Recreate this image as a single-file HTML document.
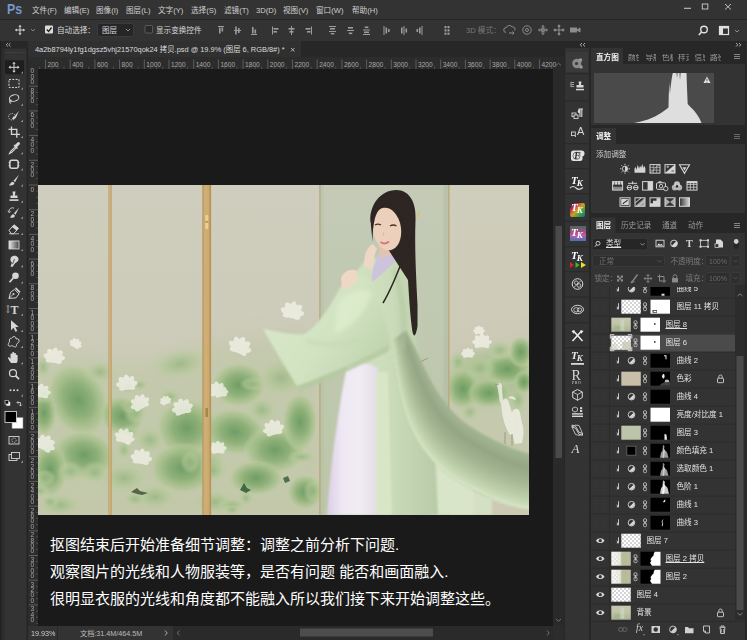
<!DOCTYPE html>
<html><head><meta charset="utf-8">
<style>
html,body{margin:0;padding:0;background:#323232;}
body{width:747px;height:640px;position:relative;overflow:hidden;font-family:"Liberation Sans","Noto Sans CJK SC",sans-serif;color:#d0d0d0;font-size:7.6px;}
.a{position:absolute;}
.t{position:absolute;white-space:nowrap;line-height:1;}
svg{position:absolute;overflow:visible;}
#menubar{left:0;top:0;width:747px;height:19px;background:#333;}
#optbar{left:0;top:19px;width:747px;height:22px;background:#333;border-top:1px solid #262626;box-sizing:border-box;}
#tools{left:0;top:41px;width:28px;height:599px;background:#333;}
#tabbar{left:28px;top:41px;width:536px;height:16px;background:#272727;}
#tab{left:0;top:0;width:273px;height:16px;background:#303030;}
#hruler{left:28px;top:57px;width:536px;height:12px;background:#2c2c2c;}
#vruler{left:28px;top:69px;width:10px;height:557px;background:#2c2c2c;}
#canvas{left:38px;top:69px;width:515px;height:557px;background:#1a1a1a;}
#vscroll{left:553px;top:57px;width:11px;height:569px;background:#2a2a2a;}
#status{left:28px;top:626px;width:536px;height:14px;background:#333;}
#rhead{left:564px;top:41px;width:183px;height:7px;background:#272727;}
#strip{left:565px;top:48px;width:24px;height:592px;background:#333;}
#gap{left:589px;top:48px;width:2px;height:592px;background:#272727;}
#panels{left:591px;top:48px;width:156px;height:592px;background:#333;}
#photo{left:38px;top:185px;width:491px;height:330px;background:#c9c8b4;overflow:hidden;}
.rl{font-size:6.6px;color:#a8a8a8;}
.cap{font-size:15px;color:#fff;left:50px;}
</style></head><body>
<div id="menubar" class="a"></div>
<div id="optbar" class="a"></div>
<div id="tools" class="a"></div>
<div id="tabbar" class="a"><div id="tab" class="a"></div></div>
<div id="hruler" class="a"></div>
<div id="vruler" class="a"></div>
<div id="canvas" class="a"></div>
<div id="vscroll" class="a"></div>
<div id="status" class="a"></div>
<div id="rhead" class="a"></div>
<div id="strip" class="a"></div>
<div id="gap" class="a"></div>
<div id="panels" class="a"></div>
<div id="photo" class="a"><svg style="left:0;top:0" width="491" height="330" viewBox="38 185 491 330">
<defs>
<filter id="b05" x="-20%" y="-20%" width="140%" height="140%"><feGaussianBlur stdDeviation="0.600"/></filter>
<filter id="b1" x="-20%" y="-20%" width="140%" height="140%"><feGaussianBlur stdDeviation="1"/></filter>
<filter id="b2" x="-20%" y="-20%" width="140%" height="140%"><feGaussianBlur stdDeviation="2.200"/></filter>
<filter id="b4" x="-30%" y="-30%" width="160%" height="160%"><feGaussianBlur stdDeviation="4.500"/></filter>
<filter id="b8" x="-30%" y="-30%" width="160%" height="160%"><feGaussianBlur stdDeviation="9"/></filter>
<linearGradient id="bgL" x1="0" y1="0" x2="0" y2="1"><stop offset="0" stop-color="#cfcebe"/><stop offset="0.450" stop-color="#cdccba"/><stop offset="1" stop-color="#c9c9b2"/></linearGradient>
<linearGradient id="bgC" x1="0" y1="0" x2="0" y2="1"><stop offset="0" stop-color="#c4cab6"/><stop offset="1" stop-color="#bcc7aa"/></linearGradient>
<linearGradient id="bgR" x1="0" y1="0" x2="0" y2="1"><stop offset="0" stop-color="#cfcdbb"/><stop offset="1" stop-color="#cbc9b4"/></linearGradient>
<linearGradient id="wood" x1="0" y1="0" x2="1" y2="0"><stop offset="0" stop-color="#b8955c"/><stop offset="0.300" stop-color="#d1b079"/><stop offset="0.700" stop-color="#ccaa70"/><stop offset="1" stop-color="#b08c52"/></linearGradient>
<linearGradient id="band" gradientUnits="userSpaceOnUse" x1="440" y1="380" x2="400" y2="470"><stop offset="0" stop-color="#9aac8a"/><stop offset="0.350" stop-color="#a2b591"/><stop offset="0.700" stop-color="#b7caa4"/><stop offset="1" stop-color="#c9dbb6"/></linearGradient>
<linearGradient id="skirt" x1="0" y1="0" x2="1" y2="0"><stop offset="0" stop-color="#dccfe6"/><stop offset="0.300" stop-color="#efe8f4"/><stop offset="0.650" stop-color="#f1ecf3"/><stop offset="1" stop-color="#e3dde6"/></linearGradient>
<linearGradient id="dress" x1="0" y1="0" x2="1" y2="0"><stop offset="0" stop-color="#d4e4c4"/><stop offset="0.500" stop-color="#cddebc"/><stop offset="1" stop-color="#b8cba8"/></linearGradient>
<linearGradient id="sleeve" x1="0" y1="0" x2="1" y2="0.600"><stop offset="0" stop-color="#d9e9ca"/><stop offset="0.600" stop-color="#d2e3c2"/><stop offset="1" stop-color="#c1d5b0"/></linearGradient>
<radialGradient id="leaf"><stop offset="0" stop-color="#66985f" stop-opacity="0.900"/><stop offset="0.450" stop-color="#86ac70" stop-opacity="0.850"/><stop offset="0.800" stop-color="#abc38f" stop-opacity="0.700"/><stop offset="1" stop-color="#c2cda6" stop-opacity="0"/></radialGradient>
<radialGradient id="leafL"><stop offset="0" stop-color="#93b47c" stop-opacity="0.750"/><stop offset="0.600" stop-color="#b3c898" stop-opacity="0.550"/><stop offset="1" stop-color="#c2cda6" stop-opacity="0"/></radialGradient>

</defs>
<rect x="38" y="185" width="283" height="330" fill="url(#bgL)"/>
<rect x="320" y="185" width="129" height="330" fill="url(#bgC)"/>
<rect x="449" y="185" width="80" height="330" fill="url(#bgR)"/>
<g filter="url(#b8)">
<path d="M30 375 L70 350 L130 365 L180 350 L240 340 L300 330 L325 340 L325 520 L30 520z" fill="#bdc9a4" opacity="0.550"/>
<path d="M449 360 L480 345 L535 335 L535 520 L449 520z" fill="#bdc9a6" opacity="0.500"/>
</g>
<ellipse cx="78" cy="400" rx="30" ry="39" transform="rotate(-25 78 400)" fill="url(#leaf)"/>
<ellipse cx="84" cy="455" rx="32" ry="25" transform="rotate(10 84 455)" fill="url(#leaf)"/>
<ellipse cx="50" cy="470" rx="18" ry="28" transform="rotate(0 50 470)" fill="url(#leaf)"/>
<ellipse cx="44" cy="413" rx="13" ry="23" transform="rotate(0 44 413)" fill="url(#leaf)"/>
<ellipse cx="122" cy="416" rx="23" ry="20" transform="rotate(20 122 416)" fill="url(#leaf)"/>
<ellipse cx="180" cy="364" rx="30" ry="16" transform="rotate(-10 180 364)" fill="url(#leafL)"/>
<ellipse cx="187" cy="428" rx="32" ry="30" transform="rotate(0 187 428)" fill="url(#leaf)"/>
<ellipse cx="183" cy="468" rx="34" ry="26" transform="rotate(0 183 468)" fill="url(#leaf)"/>
<ellipse cx="124" cy="478" rx="25" ry="16" transform="rotate(0 124 478)" fill="url(#leafL)"/>
<ellipse cx="239" cy="385" rx="28" ry="23" transform="rotate(0 239 385)" fill="url(#leaf)"/>
<ellipse cx="235" cy="432" rx="32" ry="24" transform="rotate(10 235 432)" fill="url(#leaf)"/>
<ellipse cx="281" cy="378" rx="25" ry="20" transform="rotate(0 281 378)" fill="url(#leafL)"/>
<ellipse cx="275" cy="450" rx="32" ry="24" transform="rotate(0 275 450)" fill="url(#leaf)"/>
<ellipse cx="256" cy="478" rx="28" ry="18" transform="rotate(0 256 478)" fill="url(#leaf)"/>
<ellipse cx="155" cy="497" rx="23" ry="14" transform="rotate(0 155 497)" fill="url(#leafL)"/>
<ellipse cx="300" cy="422" rx="18" ry="30" transform="rotate(0 300 422)" fill="url(#leaf)"/>
<ellipse cx="305" cy="492" rx="18" ry="18" transform="rotate(0 305 492)" fill="url(#leaf)"/>
<ellipse cx="215" cy="502" rx="21" ry="13" transform="rotate(0 215 502)" fill="url(#leafL)"/>
<ellipse cx="60" cy="505" rx="23" ry="12" transform="rotate(0 60 505)" fill="url(#leafL)"/>
<ellipse cx="100" cy="372" rx="16" ry="12" transform="rotate(0 100 372)" fill="url(#leafL)"/>
<ellipse cx="150" cy="440" rx="16" ry="14" transform="rotate(0 150 440)" fill="url(#leafL)"/>
<ellipse cx="213" cy="465" rx="14" ry="16" transform="rotate(0 213 465)" fill="url(#leafL)"/>
<ellipse cx="262" cy="410" rx="16" ry="14" transform="rotate(0 262 410)" fill="url(#leafL)"/>
<ellipse cx="213" cy="471" rx="14" ry="12" fill="url(#leafL)"/>
<ellipse cx="246" cy="498" rx="8" ry="9" fill="url(#leafL)"/>
<ellipse cx="302" cy="457" rx="15" ry="7" fill="url(#leafL)"/>
<ellipse cx="170" cy="397" rx="12" ry="9" fill="url(#leafL)"/>
<ellipse cx="44" cy="393" rx="10" ry="11" fill="url(#leafL)"/>
<ellipse cx="253" cy="384" rx="14" ry="7" fill="url(#leafL)"/>
<ellipse cx="40" cy="491" rx="10" ry="7" fill="url(#leafL)"/>
<ellipse cx="313" cy="491" rx="10" ry="12" fill="url(#leafL)"/>
<ellipse cx="190" cy="462" rx="10" ry="12" fill="url(#leafL)"/>
<ellipse cx="232" cy="505" rx="15" ry="8" fill="url(#leafL)"/>
<ellipse cx="140" cy="385" rx="9" ry="6" fill="url(#leafL)"/>
<ellipse cx="124" cy="450" rx="8" ry="10" fill="url(#leafL)"/>
<ellipse cx="134" cy="406" rx="15" ry="9" fill="url(#leafL)"/>
<ellipse cx="128" cy="432" rx="14" ry="6" fill="url(#leafL)"/>
<ellipse cx="311" cy="363" rx="14" ry="11" fill="url(#leafL)"/>
<ellipse cx="45" cy="478" rx="11" ry="9" fill="url(#leafL)"/>
<ellipse cx="43" cy="367" rx="9" ry="12" fill="url(#leafL)"/>
<ellipse cx="95" cy="473" rx="15" ry="12" fill="url(#leafL)"/>
<ellipse cx="136" cy="413" rx="12" ry="11" fill="url(#leafL)"/>
<ellipse cx="70" cy="472" rx="14" ry="11" fill="url(#leafL)"/>
<ellipse cx="50" cy="502" rx="9" ry="8" fill="url(#leafL)"/>
<ellipse cx="135" cy="499" rx="12" ry="8" fill="url(#leafL)"/>
<ellipse cx="128" cy="387" rx="9" ry="7" fill="url(#leafL)"/>
<ellipse cx="232" cy="510" rx="9" ry="6" fill="url(#leafL)"/>
<g filter="url(#b4)"><ellipse cx="490" cy="378" rx="40" ry="26" fill="#a3bb8a" opacity="0.600"/></g>
<ellipse cx="463" cy="389" rx="18" ry="21" fill="url(#leaf)"/>
<ellipse cx="507" cy="369" rx="25" ry="16" fill="url(#leaf)"/>
<ellipse cx="489" cy="393" rx="22" ry="15" fill="url(#leaf)"/>
<ellipse cx="521" cy="352" rx="13" ry="16" fill="url(#leaf)"/>
<ellipse cx="470" cy="412" rx="10" ry="10" fill="url(#leafL)"/>
<ellipse cx="500" cy="472" rx="12" ry="10" fill="url(#leafL)"/>
<ellipse cx="518" cy="400" rx="10" ry="14" fill="url(#leafL)"/>
<ellipse cx="460" cy="430" rx="8" ry="8" fill="url(#leafL)"/>
<ellipse cx="480" cy="368" rx="16" ry="12" fill="url(#leafL)"/>
<ellipse cx="500" cy="350" rx="14" ry="10" fill="url(#leafL)"/>
<ellipse cx="458" cy="362" rx="10" ry="12" fill="url(#leafL)"/>
<ellipse cx="524" cy="382" rx="10" ry="12" fill="url(#leaf)"/>
<g fill="#f0f1e6" opacity="0.800" filter="url(#b05)">
<g transform="translate(54 359) rotate(8) scale(1.55)"><ellipse cy="-3" rx="2.2" ry="4.5" transform="rotate(0)"/><ellipse cy="-3" rx="2.2" ry="4.5" transform="rotate(38)"/><ellipse cy="-3" rx="2.2" ry="4.5" transform="rotate(-38)"/><ellipse cy="-3" rx="2" ry="4.2" transform="rotate(75)"/><ellipse cy="-3" rx="2" ry="4.2" transform="rotate(-75)"/><ellipse cy="-2" rx="1.8" ry="3.5" transform="rotate(110)"/><ellipse cy="-2" rx="1.8" ry="3.5" transform="rotate(-110)"/><circle r="2.500"/></g>
<g transform="translate(41 394) rotate(4) scale(1.40)"><ellipse cy="-3" rx="2.2" ry="4.5" transform="rotate(0)"/><ellipse cy="-3" rx="2.2" ry="4.5" transform="rotate(38)"/><ellipse cy="-3" rx="2.2" ry="4.5" transform="rotate(-38)"/><ellipse cy="-3" rx="2" ry="4.2" transform="rotate(75)"/><ellipse cy="-3" rx="2" ry="4.2" transform="rotate(-75)"/><ellipse cy="-2" rx="1.8" ry="3.5" transform="rotate(110)"/><ellipse cy="-2" rx="1.8" ry="3.5" transform="rotate(-110)"/><circle r="2.500"/></g>
<g transform="translate(44 446) rotate(29) scale(1.55)"><ellipse cy="-3" rx="2.2" ry="4.5" transform="rotate(0)"/><ellipse cy="-3" rx="2.2" ry="4.5" transform="rotate(38)"/><ellipse cy="-3" rx="2.2" ry="4.5" transform="rotate(-38)"/><ellipse cy="-3" rx="2" ry="4.2" transform="rotate(75)"/><ellipse cy="-3" rx="2" ry="4.2" transform="rotate(-75)"/><ellipse cy="-2" rx="1.8" ry="3.5" transform="rotate(110)"/><ellipse cy="-2" rx="1.8" ry="3.5" transform="rotate(-110)"/><circle r="2.500"/></g>
<g transform="translate(127 386) rotate(-5) scale(1.55)"><ellipse cy="-3" rx="2.2" ry="4.5" transform="rotate(0)"/><ellipse cy="-3" rx="2.2" ry="4.5" transform="rotate(38)"/><ellipse cy="-3" rx="2.2" ry="4.5" transform="rotate(-38)"/><ellipse cy="-3" rx="2" ry="4.2" transform="rotate(75)"/><ellipse cy="-3" rx="2" ry="4.2" transform="rotate(-75)"/><ellipse cy="-2" rx="1.8" ry="3.5" transform="rotate(110)"/><ellipse cy="-2" rx="1.8" ry="3.5" transform="rotate(-110)"/><circle r="2.500"/></g>
<g transform="translate(141 405) rotate(-28) scale(1.47)"><ellipse cy="-3" rx="2.2" ry="4.5" transform="rotate(0)"/><ellipse cy="-3" rx="2.2" ry="4.5" transform="rotate(38)"/><ellipse cy="-3" rx="2.2" ry="4.5" transform="rotate(-38)"/><ellipse cy="-3" rx="2" ry="4.2" transform="rotate(75)"/><ellipse cy="-3" rx="2" ry="4.2" transform="rotate(-75)"/><ellipse cy="-2" rx="1.8" ry="3.5" transform="rotate(110)"/><ellipse cy="-2" rx="1.8" ry="3.5" transform="rotate(-110)"/><circle r="2.500"/></g>
<g transform="translate(183 410) rotate(-15) scale(1.55)"><ellipse cy="-3" rx="2.2" ry="4.5" transform="rotate(0)"/><ellipse cy="-3" rx="2.2" ry="4.5" transform="rotate(38)"/><ellipse cy="-3" rx="2.2" ry="4.5" transform="rotate(-38)"/><ellipse cy="-3" rx="2" ry="4.2" transform="rotate(75)"/><ellipse cy="-3" rx="2" ry="4.2" transform="rotate(-75)"/><ellipse cy="-2" rx="1.8" ry="3.5" transform="rotate(110)"/><ellipse cy="-2" rx="1.8" ry="3.5" transform="rotate(-110)"/><circle r="2.500"/></g>
<g transform="translate(124 439) rotate(17) scale(1.47)"><ellipse cy="-3" rx="2.2" ry="4.5" transform="rotate(0)"/><ellipse cy="-3" rx="2.2" ry="4.5" transform="rotate(38)"/><ellipse cy="-3" rx="2.2" ry="4.5" transform="rotate(-38)"/><ellipse cy="-3" rx="2" ry="4.2" transform="rotate(75)"/><ellipse cy="-3" rx="2" ry="4.2" transform="rotate(-75)"/><ellipse cy="-2" rx="1.8" ry="3.5" transform="rotate(110)"/><ellipse cy="-2" rx="1.8" ry="3.5" transform="rotate(-110)"/><circle r="2.500"/></g>
<g transform="translate(141 460) rotate(8) scale(1.55)"><ellipse cy="-3" rx="2.2" ry="4.5" transform="rotate(0)"/><ellipse cy="-3" rx="2.2" ry="4.5" transform="rotate(38)"/><ellipse cy="-3" rx="2.2" ry="4.5" transform="rotate(-38)"/><ellipse cy="-3" rx="2" ry="4.2" transform="rotate(75)"/><ellipse cy="-3" rx="2" ry="4.2" transform="rotate(-75)"/><ellipse cy="-2" rx="1.8" ry="3.5" transform="rotate(110)"/><ellipse cy="-2" rx="1.8" ry="3.5" transform="rotate(-110)"/><circle r="2.500"/></g>
<g transform="translate(221 394) rotate(-8) scale(1.08)"><ellipse cy="-3" rx="2.2" ry="4.5" transform="rotate(0)"/><ellipse cy="-3" rx="2.2" ry="4.5" transform="rotate(38)"/><ellipse cy="-3" rx="2.2" ry="4.5" transform="rotate(-38)"/><ellipse cy="-3" rx="2" ry="4.2" transform="rotate(75)"/><ellipse cy="-3" rx="2" ry="4.2" transform="rotate(-75)"/><ellipse cy="-2" rx="1.8" ry="3.5" transform="rotate(110)"/><ellipse cy="-2" rx="1.8" ry="3.5" transform="rotate(-110)"/><circle r="2.500"/></g>
<g transform="translate(239 349) rotate(22) scale(1.71)"><ellipse cy="-3" rx="2.2" ry="4.5" transform="rotate(0)"/><ellipse cy="-3" rx="2.2" ry="4.5" transform="rotate(38)"/><ellipse cy="-3" rx="2.2" ry="4.5" transform="rotate(-38)"/><ellipse cy="-3" rx="2" ry="4.2" transform="rotate(75)"/><ellipse cy="-3" rx="2" ry="4.2" transform="rotate(-75)"/><ellipse cy="-2" rx="1.8" ry="3.5" transform="rotate(110)"/><ellipse cy="-2" rx="1.8" ry="3.5" transform="rotate(-110)"/><circle r="2.500"/></g>
<g transform="translate(274 431) rotate(-14) scale(1.55)"><ellipse cy="-3" rx="2.2" ry="4.5" transform="rotate(0)"/><ellipse cy="-3" rx="2.2" ry="4.5" transform="rotate(38)"/><ellipse cy="-3" rx="2.2" ry="4.5" transform="rotate(-38)"/><ellipse cy="-3" rx="2" ry="4.2" transform="rotate(75)"/><ellipse cy="-3" rx="2" ry="4.2" transform="rotate(-75)"/><ellipse cy="-2" rx="1.8" ry="3.5" transform="rotate(110)"/><ellipse cy="-2" rx="1.8" ry="3.5" transform="rotate(-110)"/><circle r="2.500"/></g>
<g transform="translate(218 450) rotate(-1) scale(1.24)"><ellipse cy="-3" rx="2.2" ry="4.5" transform="rotate(0)"/><ellipse cy="-3" rx="2.2" ry="4.5" transform="rotate(38)"/><ellipse cy="-3" rx="2.2" ry="4.5" transform="rotate(-38)"/><ellipse cy="-3" rx="2" ry="4.2" transform="rotate(75)"/><ellipse cy="-3" rx="2" ry="4.2" transform="rotate(-75)"/><ellipse cy="-2" rx="1.8" ry="3.5" transform="rotate(110)"/><ellipse cy="-2" rx="1.8" ry="3.5" transform="rotate(-110)"/><circle r="2.500"/></g>
<g transform="translate(292 314) rotate(11) scale(1.71)"><ellipse cy="-3" rx="2.2" ry="4.5" transform="rotate(0)"/><ellipse cy="-3" rx="2.2" ry="4.5" transform="rotate(38)"/><ellipse cy="-3" rx="2.2" ry="4.5" transform="rotate(-38)"/><ellipse cy="-3" rx="2" ry="4.2" transform="rotate(75)"/><ellipse cy="-3" rx="2" ry="4.2" transform="rotate(-75)"/><ellipse cy="-2" rx="1.8" ry="3.5" transform="rotate(110)"/><ellipse cy="-2" rx="1.8" ry="3.5" transform="rotate(-110)"/><circle r="2.500"/></g>
<g transform="translate(217 392) rotate(-4) scale(1.40)"><ellipse cy="-3" rx="2.2" ry="4.5" transform="rotate(0)"/><ellipse cy="-3" rx="2.2" ry="4.5" transform="rotate(38)"/><ellipse cy="-3" rx="2.2" ry="4.5" transform="rotate(-38)"/><ellipse cy="-3" rx="2" ry="4.2" transform="rotate(75)"/><ellipse cy="-3" rx="2" ry="4.2" transform="rotate(-75)"/><ellipse cy="-2" rx="1.8" ry="3.5" transform="rotate(110)"/><ellipse cy="-2" rx="1.8" ry="3.5" transform="rotate(-110)"/><circle r="2.500"/></g>
<g transform="translate(166 402) rotate(-21) scale(0.85)"><ellipse cy="-3" rx="2.2" ry="4.5" transform="rotate(0)"/><ellipse cy="-3" rx="2.2" ry="4.5" transform="rotate(38)"/><ellipse cy="-3" rx="2.2" ry="4.5" transform="rotate(-38)"/><ellipse cy="-3" rx="2" ry="4.2" transform="rotate(75)"/><ellipse cy="-3" rx="2" ry="4.2" transform="rotate(-75)"/><ellipse cy="-2" rx="1.8" ry="3.5" transform="rotate(110)"/><ellipse cy="-2" rx="1.8" ry="3.5" transform="rotate(-110)"/><circle r="2.500"/></g>
<g transform="translate(305 347) rotate(-27) scale(1.08)"><ellipse cy="-3" rx="2.2" ry="4.5" transform="rotate(0)"/><ellipse cy="-3" rx="2.2" ry="4.5" transform="rotate(38)"/><ellipse cy="-3" rx="2.2" ry="4.5" transform="rotate(-38)"/><ellipse cy="-3" rx="2" ry="4.2" transform="rotate(75)"/><ellipse cy="-3" rx="2" ry="4.2" transform="rotate(-75)"/><ellipse cy="-2" rx="1.8" ry="3.5" transform="rotate(110)"/><ellipse cy="-2" rx="1.8" ry="3.5" transform="rotate(-110)"/><circle r="2.500"/></g>
<g transform="translate(75 345) rotate(28) scale(0.93)"><ellipse cy="-3" rx="2.2" ry="4.5" transform="rotate(0)"/><ellipse cy="-3" rx="2.2" ry="4.5" transform="rotate(38)"/><ellipse cy="-3" rx="2.2" ry="4.5" transform="rotate(-38)"/><ellipse cy="-3" rx="2" ry="4.2" transform="rotate(75)"/><ellipse cy="-3" rx="2" ry="4.2" transform="rotate(-75)"/><ellipse cy="-2" rx="1.8" ry="3.5" transform="rotate(110)"/><ellipse cy="-2" rx="1.8" ry="3.5" transform="rotate(-110)"/><circle r="2.500"/></g>
<g transform="translate(482 344) rotate(0) scale(1.40)"><ellipse cy="-3" rx="2.2" ry="4.5" transform="rotate(0)"/><ellipse cy="-3" rx="2.2" ry="4.5" transform="rotate(38)"/><ellipse cy="-3" rx="2.2" ry="4.5" transform="rotate(-38)"/><ellipse cy="-3" rx="2" ry="4.2" transform="rotate(75)"/><ellipse cy="-3" rx="2" ry="4.2" transform="rotate(-75)"/><ellipse cy="-2" rx="1.8" ry="3.5" transform="rotate(110)"/><ellipse cy="-2" rx="1.8" ry="3.5" transform="rotate(-110)"/><circle r="2.500"/></g>
<g transform="translate(468 355) rotate(0) scale(0.98)"><ellipse cy="-3" rx="2.2" ry="4.5" transform="rotate(0)"/><ellipse cy="-3" rx="2.2" ry="4.5" transform="rotate(38)"/><ellipse cy="-3" rx="2.2" ry="4.5" transform="rotate(-38)"/><ellipse cy="-3" rx="2" ry="4.2" transform="rotate(75)"/><ellipse cy="-3" rx="2" ry="4.2" transform="rotate(-75)"/><ellipse cy="-2" rx="1.8" ry="3.5" transform="rotate(110)"/><ellipse cy="-2" rx="1.8" ry="3.5" transform="rotate(-110)"/><circle r="2.500"/></g>
<g transform="translate(479 332) rotate(0) scale(0.84)"><ellipse cy="-3" rx="2.2" ry="4.5" transform="rotate(0)"/><ellipse cy="-3" rx="2.2" ry="4.5" transform="rotate(38)"/><ellipse cy="-3" rx="2.2" ry="4.5" transform="rotate(-38)"/><ellipse cy="-3" rx="2" ry="4.2" transform="rotate(75)"/><ellipse cy="-3" rx="2" ry="4.2" transform="rotate(-75)"/><ellipse cy="-2" rx="1.8" ry="3.5" transform="rotate(110)"/><ellipse cy="-2" rx="1.8" ry="3.5" transform="rotate(-110)"/><circle r="2.500"/></g>
<path d="M501 403c3-6 7-6 8 0l3 10c4 4 6 10 5 20l-7 2c-4-6-8-16-9-32z"/>
<path d="M512 412c3-5 7-4 8 1l2 10c2 5 2 12 0 20l-7 1c-3-8-4-18-3-32z"/>
<path d="M497 384c2-2 5-1 5 2l1 16-3 1z"/><path d="M508 398c3-3 7-2 8 2"/>
</g>
<path d="M505 432v12M512 434v12M499 384l-4 1" stroke="#8a8a72" stroke-width="0.700" fill="none"/>
<g filter="url(#b05)"><path d="M131 492l6-4 3 3 8 2-6 2-5-1z" fill="#3f4a36" opacity="0.800"/><path d="M240 490l4-7 3 5 4 2-5 3z" fill="#2f5a38" opacity="0.850"/><path d="M283 478l5-2 2 5-5 2z" fill="#2f5a38" opacity="0.800"/><path d="M420 362l8-4M300 350l10-3" stroke="#7a6a50" stroke-width="0.800" opacity="0.600"/></g>
<rect x="108.500" y="185" width="3" height="330" fill="url(#wood)"/>
<rect x="202.300" y="185" width="8.800" height="330" fill="url(#wood)"/>
<rect x="205.300" y="215" width="3" height="14" rx="1" fill="#ead28e"/><rect x="205.300" y="221.300" width="3" height="1.200" fill="#9a7a40"/><rect x="205.500" y="408" width="2.500" height="9" fill="#96763a" opacity="0.700"/>
<rect x="319.200" y="185" width="1.500" height="330" fill="#b9a47c" opacity="0.900"/>
<rect x="448" y="185" width="1.600" height="330" fill="#b9a880" opacity="0.900"/>
<rect x="443.500" y="185" width="4.500" height="330" fill="#b3bca4" opacity="0.550"/>
<rect x="320.700" y="185" width="3" height="330" fill="#b3bca4" opacity="0.350"/>
<g filter="url(#b1)">
<path d="M430 452 C445 478 470 496 529 508 L529 515 L430 515z" fill="#d4e0c3"/>
<path d="M492 515 L529 515 L529 508 C516 507 503 504 492 500z" fill="#cdc9b4"/>
<path d="M438 464 L473 476 L473 515 L438 515z" fill="#d9e5c8"/><path d="M438 464 L473 476" stroke="#e6f0d8" stroke-width="1.200"/>
</g>
<g filter="url(#b1)">
<path d="M364 262 C372 256 384 258 392 260 C404 264 412 275 414 300 L416 336 C420 360 430 400 434 440 L438 515 L372 515 L370 400 L340 360 L326 322 C335 300 350 280 364 262z" fill="url(#dress)"/>
<path d="M347 366 C355 362 368 362 378 368 L378 515 L327 515 C330 470 338 410 347 366z" fill="url(#skirt)"/>
<path d="M376 372 L388 372 L392 515 L376 515z" fill="#d9e7c8" opacity="0.900"/>
<path d="M406.0 330.0 L409.5 336.5 L412.8 343.2 L416.1 350.0 L419.3 357.0 L422.6 364.0 L426.0 371.0 L429.5 378.0 L433.3 384.8 L437.3 391.4 L441.6 397.9 L446.3 404.1 L451.2 410.0 L456.3 415.3 L461.5 420.0 L467.0 424.2 L473.2 428.2 L480.0 432.4 L487.7 436.8 L495.9 441.1 L504.5 445.1 L513.1 448.8 L521.7 451.8 L530.0 454.0 L530.0 510.0 L518.5 507.8 L506.8 504.5 L495.2 500.3 L484.1 495.6 L473.8 490.6 L464.6 485.7 L456.9 481.1 L450.4 476.7 L444.7 472.2 L439.2 467.2 L433.4 461.4 L427.5 454.7 L421.8 447.2 L416.5 438.7 L411.8 429.5 L407.6 419.5 L404.0 408.8 L401.0 397.7 L398.5 386.2 L396.4 374.7 L394.7 363.4 L393.3 352.4 L392.0 342.0z" fill="#a1b391"/>
<path d="M405.0 330.9 L408.3 337.6 L411.5 344.6 L414.7 351.8 L417.8 359.1 L421.1 366.4 L424.4 373.7 L428.0 380.9 L431.8 388.0 L435.8 394.8 L440.2 401.4 L444.9 407.8 L449.9 413.7 L455.0 419.0 L460.3 423.7 L465.9 427.9 L472.0 432.0 L478.9 436.2 L486.7 440.6 L495.1 445.0 L503.8 449.1 L512.7 452.7 L521.5 455.8 L530.0 458.0 L530.0 510.0 L518.5 507.8 L506.8 504.5 L495.2 500.3 L484.1 495.6 L473.8 490.6 L464.6 485.7 L456.9 481.1 L450.4 476.7 L444.7 472.2 L439.2 467.2 L433.4 461.4 L427.5 454.7 L421.8 447.2 L416.5 438.7 L411.8 429.5 L407.6 419.5 L404.0 408.8 L401.0 397.7 L398.5 386.2 L396.4 374.7 L394.7 363.4 L393.3 352.4 L392.0 342.0z" fill="#9daf8d"/>
<path d="M404.0 331.7 L407.2 338.7 L410.2 346.0 L413.3 353.5 L416.3 361.2 L419.5 368.8 L422.9 376.4 L426.4 383.9 L430.2 391.2 L434.3 398.2 L438.8 404.9 L443.6 411.4 L448.6 417.3 L453.8 422.7 L459.1 427.4 L464.7 431.7 L470.8 435.8 L477.8 440.0 L485.7 444.5 L494.2 448.8 L503.1 453.0 L512.2 456.7 L521.3 459.8 L530.0 462.0 L530.0 510.0 L518.5 507.8 L506.8 504.5 L495.2 500.3 L484.1 495.6 L473.8 490.6 L464.6 485.7 L456.9 481.1 L450.4 476.7 L444.7 472.2 L439.2 467.2 L433.4 461.4 L427.5 454.7 L421.8 447.2 L416.5 438.7 L411.8 429.5 L407.6 419.5 L404.0 408.8 L401.0 397.7 L398.5 386.2 L396.4 374.7 L394.7 363.4 L393.3 352.4 L392.0 342.0z" fill="#98aa89"/>
<path d="M403.0 332.6 L406.0 339.9 L408.9 347.5 L411.9 355.3 L414.9 363.3 L418.0 371.2 L421.3 379.1 L424.8 386.9 L428.7 394.4 L432.9 401.6 L437.4 408.5 L442.2 415.0 L447.4 421.0 L452.6 426.4 L457.9 431.2 L463.5 435.4 L469.7 439.6 L476.7 443.8 L484.7 448.3 L493.4 452.7 L502.5 457.0 L511.8 460.7 L521.0 463.8 L530.0 466.0 L530.0 510.0 L518.5 507.8 L506.8 504.5 L495.2 500.3 L484.1 495.6 L473.8 490.6 L464.6 485.7 L456.9 481.1 L450.4 476.7 L444.7 472.2 L439.2 467.2 L433.4 461.4 L427.5 454.7 L421.8 447.2 L416.5 438.7 L411.8 429.5 L407.6 419.5 L404.0 408.8 L401.0 397.7 L398.5 386.2 L396.4 374.7 L394.7 363.4 L393.3 352.4 L392.0 342.0z" fill="#94a685"/>
<path d="M402.0 333.4 L404.8 341.0 L407.6 348.9 L410.5 357.1 L413.4 365.3 L416.4 373.6 L419.7 381.8 L423.3 389.8 L427.2 397.5 L431.4 404.9 L436.0 412.0 L440.9 418.6 L446.1 424.7 L451.4 430.1 L456.7 434.9 L462.3 439.2 L468.5 443.3 L475.6 447.6 L483.7 452.2 L492.5 456.6 L501.8 460.9 L511.3 464.7 L520.8 467.8 L530.0 470.0 L530.0 510.0 L518.5 507.8 L506.8 504.5 L495.2 500.3 L484.1 495.6 L473.8 490.6 L464.6 485.7 L456.9 481.1 L450.4 476.7 L444.7 472.2 L439.2 467.2 L433.4 461.4 L427.5 454.7 L421.8 447.2 L416.5 438.7 L411.8 429.5 L407.6 419.5 L404.0 408.8 L401.0 397.7 L398.5 386.2 L396.4 374.7 L394.7 363.4 L393.3 352.4 L392.0 342.0z" fill="#98aa88"/>
<path d="M401.0 334.3 L403.7 342.1 L406.3 350.4 L409.1 358.8 L411.9 367.4 L414.9 376.0 L418.2 384.5 L421.7 392.8 L425.6 400.7 L429.9 408.3 L434.5 415.5 L439.6 422.2 L444.8 428.4 L450.2 433.8 L455.5 438.6 L461.1 442.9 L467.3 447.1 L474.5 451.4 L482.7 456.0 L491.7 460.5 L501.2 464.8 L510.9 468.7 L520.6 471.8 L530.0 474.0 L530.0 510.0 L518.5 507.8 L506.8 504.5 L495.2 500.3 L484.1 495.6 L473.8 490.6 L464.6 485.7 L456.9 481.1 L450.4 476.7 L444.7 472.2 L439.2 467.2 L433.4 461.4 L427.5 454.7 L421.8 447.2 L416.5 438.7 L411.8 429.5 L407.6 419.5 L404.0 408.8 L401.0 397.7 L398.5 386.2 L396.4 374.7 L394.7 363.4 L393.3 352.4 L392.0 342.0z" fill="#9cae8b"/>
<path d="M400.0 335.1 L402.5 343.3 L405.1 351.8 L407.7 360.6 L410.4 369.5 L413.4 378.4 L416.6 387.2 L420.1 395.8 L424.1 403.9 L428.4 411.7 L433.1 419.0 L438.2 425.8 L443.5 432.0 L448.9 437.6 L454.3 442.4 L459.9 446.7 L466.2 450.9 L473.4 455.3 L481.8 459.8 L490.9 464.4 L500.5 468.8 L510.4 472.6 L520.3 475.8 L530.0 478.0 L530.0 510.0 L518.5 507.8 L506.8 504.5 L495.2 500.3 L484.1 495.6 L473.8 490.6 L464.6 485.7 L456.9 481.1 L450.4 476.7 L444.7 472.2 L439.2 467.2 L433.4 461.4 L427.5 454.7 L421.8 447.2 L416.5 438.7 L411.8 429.5 L407.6 419.5 L404.0 408.8 L401.0 397.7 L398.5 386.2 L396.4 374.7 L394.7 363.4 L393.3 352.4 L392.0 342.0z" fill="#a0b28f"/>
<path d="M399.0 336.0 L401.4 344.4 L403.8 353.3 L406.3 362.4 L408.9 371.6 L411.8 380.8 L415.0 389.9 L418.6 398.7 L422.5 407.1 L426.9 415.1 L431.7 422.5 L436.9 429.4 L442.3 435.7 L447.7 441.3 L453.1 446.1 L458.7 450.4 L465.0 454.6 L472.3 459.1 L480.8 463.7 L490.0 468.3 L499.8 472.7 L510.0 476.6 L520.1 479.8 L530.0 482.0 L530.0 510.0 L518.5 507.8 L506.8 504.5 L495.2 500.3 L484.1 495.6 L473.8 490.6 L464.6 485.7 L456.9 481.1 L450.4 476.7 L444.7 472.2 L439.2 467.2 L433.4 461.4 L427.5 454.7 L421.8 447.2 L416.5 438.7 L411.8 429.5 L407.6 419.5 L404.0 408.8 L401.0 397.7 L398.5 386.2 L396.4 374.7 L394.7 363.4 L393.3 352.4 L392.0 342.0z" fill="#a5b894"/>
<path d="M398.0 336.9 L400.2 345.6 L402.5 354.7 L404.9 364.1 L407.4 373.7 L410.3 383.3 L413.4 392.6 L417.0 401.7 L421.0 410.3 L425.4 418.5 L430.3 426.0 L435.5 433.0 L441.0 439.4 L446.5 445.0 L451.9 449.8 L457.6 454.2 L463.8 458.4 L471.2 462.9 L479.8 467.5 L489.2 472.2 L499.2 476.7 L509.5 480.6 L519.9 483.8 L530.0 486.0 L530.0 510.0 L518.5 507.8 L506.8 504.5 L495.2 500.3 L484.1 495.6 L473.8 490.6 L464.6 485.7 L456.9 481.1 L450.4 476.7 L444.7 472.2 L439.2 467.2 L433.4 461.4 L427.5 454.7 L421.8 447.2 L416.5 438.7 L411.8 429.5 L407.6 419.5 L404.0 408.8 L401.0 397.7 L398.5 386.2 L396.4 374.7 L394.7 363.4 L393.3 352.4 L392.0 342.0z" fill="#abbe9a"/>
<path d="M397.0 337.7 L399.0 346.7 L401.2 356.1 L403.5 365.9 L406.0 375.8 L408.7 385.7 L411.9 395.3 L415.4 404.7 L419.5 413.5 L423.9 421.8 L428.9 429.6 L434.2 436.7 L439.7 443.0 L445.3 448.7 L450.7 453.6 L456.4 457.9 L462.7 462.2 L470.1 466.7 L478.8 471.4 L488.3 476.1 L498.5 480.6 L509.1 484.6 L519.6 487.8 L530.0 490.0 L530.0 510.0 L518.5 507.8 L506.8 504.5 L495.2 500.3 L484.1 495.6 L473.8 490.6 L464.6 485.7 L456.9 481.1 L450.4 476.7 L444.7 472.2 L439.2 467.2 L433.4 461.4 L427.5 454.7 L421.8 447.2 L416.5 438.7 L411.8 429.5 L407.6 419.5 L404.0 408.8 L401.0 397.7 L398.5 386.2 L396.4 374.7 L394.7 363.4 L393.3 352.4 L392.0 342.0z" fill="#b2c4a0"/>
<path d="M396.0 338.6 L397.9 347.8 L399.9 357.6 L402.1 367.7 L404.5 377.9 L407.2 388.1 L410.3 398.0 L413.9 407.6 L417.9 416.7 L422.5 425.2 L427.5 433.1 L432.9 440.3 L438.5 446.7 L444.1 452.4 L449.5 457.3 L455.2 461.7 L461.5 466.0 L469.0 470.5 L477.8 475.2 L487.5 480.0 L497.9 484.5 L508.6 488.5 L519.4 491.8 L530.0 494.0 L530.0 510.0 L518.5 507.8 L506.8 504.5 L495.2 500.3 L484.1 495.6 L473.8 490.6 L464.6 485.7 L456.9 481.1 L450.4 476.7 L444.7 472.2 L439.2 467.2 L433.4 461.4 L427.5 454.7 L421.8 447.2 L416.5 438.7 L411.8 429.5 L407.6 419.5 L404.0 408.8 L401.0 397.7 L398.5 386.2 L396.4 374.7 L394.7 363.4 L393.3 352.4 L392.0 342.0z" fill="#b9cba6"/>
<path d="M395.0 339.4 L396.7 349.0 L398.6 359.0 L400.7 369.4 L403.0 380.0 L405.7 390.5 L408.7 400.7 L412.3 410.6 L416.4 419.9 L421.0 428.6 L426.0 436.6 L431.5 443.9 L437.2 450.4 L442.9 456.1 L448.3 461.0 L454.0 465.4 L460.4 469.7 L467.9 474.3 L476.8 479.1 L486.7 483.9 L497.2 488.5 L508.2 492.5 L519.2 495.8 L530.0 498.0 L530.0 510.0 L518.5 507.8 L506.8 504.5 L495.2 500.3 L484.1 495.6 L473.8 490.6 L464.6 485.7 L456.9 481.1 L450.4 476.7 L444.7 472.2 L439.2 467.2 L433.4 461.4 L427.5 454.7 L421.8 447.2 L416.5 438.7 L411.8 429.5 L407.6 419.5 L404.0 408.8 L401.0 397.7 L398.5 386.2 L396.4 374.7 L394.7 363.4 L393.3 352.4 L392.0 342.0z" fill="#c0d2ad"/>
<path d="M394.0 340.3 L395.6 350.1 L397.3 360.5 L399.2 371.2 L401.5 382.1 L404.1 392.9 L407.2 403.4 L410.7 413.6 L414.9 423.1 L419.5 432.0 L424.6 440.1 L430.2 447.5 L435.9 454.1 L441.6 459.8 L447.1 464.8 L452.8 469.2 L459.2 473.5 L466.8 478.1 L475.8 482.9 L485.8 487.8 L496.6 492.4 L507.7 496.5 L519.0 499.8 L530.0 502.0 L530.0 510.0 L518.5 507.8 L506.8 504.5 L495.2 500.3 L484.1 495.6 L473.8 490.6 L464.6 485.7 L456.9 481.1 L450.4 476.7 L444.7 472.2 L439.2 467.2 L433.4 461.4 L427.5 454.7 L421.8 447.2 L416.5 438.7 L411.8 429.5 L407.6 419.5 L404.0 408.8 L401.0 397.7 L398.5 386.2 L396.4 374.7 L394.7 363.4 L393.3 352.4 L392.0 342.0z" fill="#c8d9b5"/>
<path d="M393.0 341.1 L394.4 351.2 L396.0 361.9 L397.8 373.0 L400.0 384.1 L402.6 395.3 L405.6 406.1 L409.2 416.5 L413.3 426.3 L418.0 435.3 L423.2 443.6 L428.8 451.1 L434.7 457.7 L440.4 463.5 L445.9 468.5 L451.6 473.0 L458.0 477.3 L465.7 481.9 L474.8 486.8 L485.0 491.7 L495.9 496.4 L507.2 500.5 L518.7 503.8 L530.0 506.0 L530.0 510.0 L518.5 507.8 L506.8 504.5 L495.2 500.3 L484.1 495.6 L473.8 490.6 L464.6 485.7 L456.9 481.1 L450.4 476.7 L444.7 472.2 L439.2 467.2 L433.4 461.4 L427.5 454.7 L421.8 447.2 L416.5 438.7 L411.8 429.5 L407.6 419.5 L404.0 408.8 L401.0 397.7 L398.5 386.2 L396.4 374.7 L394.7 363.4 L393.3 352.4 L392.0 342.0z" fill="#d4e2c3"/>
<path d="M263 328.500 C278 332 292 335 304 334 C316 328 328 310 340 288 C350 276 362 272 370 280 C380 300 390 330 390 344 C370 356 345 368 297 386 C285 366 272 346 263 328.500z" fill="url(#sleeve)"/>
<path d="M297 386 C335 372 365 358 390 344 L388 352 C360 366 330 380 300 391z" fill="#b4caa1" opacity="0.850"/>
</g>
<g filter="url(#b2)"><path d="M338 304 C348 292 360 286 372 292 C366 312 352 328 334 334z" fill="#ddeecd" opacity="0.800"/><path d="M394 270 C402 290 406 320 402 350" stroke="#b0c59e" stroke-width="4" fill="none" opacity="0.700"/><path d="M306 340 C320 346 340 346 360 340" stroke="#c3d8b1" stroke-width="3" fill="none" opacity="0.800"/></g>
<g filter="url(#b05)">
<path d="M380 252 L396 246 L398 258 C392 266 384 272 372 282 C371 270 376 260 380 252z" fill="#cec3dc"/>
<path d="M378 246 L394 238 L396 252 L382 258z" fill="#e3c3ae"/>
<path d="M370.500 222 C369 206 380 190 396.500 190 C409 190 416.500 202 415.500 220 C414.500 245 416 275 417.500 305 L417.500 326 C416 336 414 338 412.500 332 C410.500 318 409.500 305 408 280 405 262 L400 250 L376 246 C373 244 370.500 236 370.500 222z" fill="#2d2521"/>
<ellipse cx="387" cy="229" rx="14" ry="21.500" fill="#ecd0bc" transform="rotate(-9 387 229)"/>
<path d="M371 226 C370 210 378 196 392 193 C404 192 414 200 415 216 C415 226 413 236 409 248 C407 236 404.500 224 400.500 216 C397 209 392.500 204 387.500 202.500 C382 205 377.500 210 375 218 C373.500 224 372.500 232 372.500 242z" fill="#2d2521"/>
<path d="M375 225c2-1.200 4-1.200 6 0M390 226c2-1.200 4.500-1.200 6.500 0" stroke="#4a342c" stroke-width="1.400" fill="none"/><path d="M380.500 242c2.500 2 5.500 2 8.500-.5" stroke="#d27b7a" stroke-width="1.900" fill="none"/><path d="M384 232l-1 4" stroke="#dcb8a3" stroke-width="1"/>
<path d="M364 266 C364 253 368 246 373 244 L377 249 C374 254 374 262 372 270z" fill="#efd7c5"/>
<path d="M341 278 C344 271 351 268 357 271 L356 283 C351 286 346 288 342 290z" fill="#efd7c5"/>
<path d="M404 256 C398 272 392 288 383 303" stroke="#2d2521" stroke-width="1.500" fill="none"/>
<path d="M417 217l3-5" stroke="#d9c07a" stroke-width="1.800"/>
</g>
</svg></div>
<div class="t cap" style="top:537.4px">抠图结束后开始准备细节调整：调整之前分析下问题.</div>
<div class="t cap" style="top:563.8px">观察图片的光线和人物服装等，是否有问题 能否和画面融入.</div>
<div class="t cap" style="top:590.7px">很明显衣服的光线和角度都不能融入所以我们接下来开始调整这些。</div>
<div class="t" style="left:6.5px;top:2.3px;font-size:14.8px;font-weight:bold;color:#7398cb;transform:scaleX(.84);transform-origin:0 0;">Ps</div>
<div class="t m" style="left:32px;top:6.5px;">文件(F)</div>
<div class="t m" style="left:64px;top:6.5px;">编辑(E)</div>
<div class="t m" style="left:96px;top:6.5px;">图像(I)</div>
<div class="t m" style="left:126px;top:6.5px;">图层(L)</div>
<div class="t m" style="left:158px;top:6.5px;">文字(Y)</div>
<div class="t m" style="left:191px;top:6.5px;">选择(S)</div>
<div class="t m" style="left:224px;top:6.5px;">滤镜(T)</div>
<div class="t m" style="left:256px;top:6.5px;">3D(D)</div>
<div class="t m" style="left:283px;top:6.5px;">视图(V)</div>
<div class="t m" style="left:316px;top:6.5px;">窗口(W)</div>
<div class="t m" style="left:352px;top:6.5px;">帮助(H)</div>
<svg style="left:680px;top:0" width="60" height="16" viewBox="680 0 60 16"><path d="M684 8.3h7" stroke="#c2c2c2" stroke-width="1.1" fill="none"/><rect x="702.3" y="4" width="5.5" height="5" stroke="#c2c2c2" stroke-width="1" fill="none"/><path d="M725 4l6 5.5M731 4l-6 5.5" stroke="#c2c2c2" stroke-width="1" fill="none"/></svg>

<div class="a" id="rightedge" style="left:744.5px;top:41px;width:2.5px;height:599px;background:#2b2b2b;border-left:0.8px solid #242424;z-index:5;"></div>

<svg style="left:0;top:20px" width="747" height="21" viewBox="0 20 747 21">
<g stroke="#d6d6d6" stroke-width="1" fill="#d6d6d6">
<path d="M20 26v8M16 30h8" fill="none"/><path d="M20 24.800l-1.600 2h3.200zM20 35.200l-1.600-2h3.200zM14.800 30l2-1.600v3.200zM25.200 30l-2-1.600v3.200z" stroke="none"/>
</g>
<path d="M31 29l2 2 2-2" stroke="#8a8a8a" fill="none" stroke-width="0.9"/>
<rect x="45" y="25.500" width="8" height="8" rx="1" fill="#dcdcdc"/><path d="M46.800 29.500l1.800 2 3-4" stroke="#222" stroke-width="1.300" fill="none"/>
<rect x="97.500" y="23.500" width="36" height="13" rx="1.500" fill="#262626" stroke="#3d3d3d" stroke-width="0.800"/>
<path d="M126 29l2 2 2-2" stroke="#9a9a9a" fill="none" stroke-width="0.900"/>
<rect x="145" y="25.500" width="7.500" height="7.500" rx="1" fill="#2a2a2a" stroke="#666" stroke-width="0.800"/>
<g fill="#9c9c9c">
<rect x="218" y="26" width="6" height="1"/><rect x="219" y="27.500" width="1.600" height="6"/><rect x="221.500" y="27.500" width="1.600" height="4"/>
<rect x="234" y="30" width="7" height="1"/><rect x="235.200" y="26.500" width="1.600" height="8"/><rect x="238" y="28" width="1.600" height="5"/>
<rect x="251" y="34" width="6" height="1"/><rect x="252" y="27" width="1.600" height="6.500"/><rect x="254.500" y="29.500" width="1.600" height="4"/>
<rect x="272" y="26.500" width="1" height="8"/><rect x="273.500" y="28" width="5" height="1.600"/><rect x="273.500" y="31" width="3.500" height="1.600"/>
<rect x="291" y="26" width="1" height="9"/><rect x="288.500" y="28" width="6" height="1.600"/><rect x="289.500" y="31" width="4" height="1.600"/>
<rect x="311" y="26.500" width="1" height="8"/><rect x="305.500" y="28" width="5" height="1.600"/><rect x="307" y="31" width="3.500" height="1.600"/>
<rect x="329" y="26" width="7" height="1"/><rect x="330" y="28" width="5" height="1.600"/><rect x="329" y="31" width="7" height="1"/><rect x="330.800" y="33" width="3.500" height="1.400"/>
<rect x="347" y="30" width="7" height="1"/><rect x="348" y="27" width="5" height="1.600"/><rect x="348.800" y="32.500" width="3.500" height="1.600"/>
<rect x="363" y="34" width="7" height="1"/><rect x="364" y="31.500" width="5" height="1.600"/><rect x="363" y="29.500" width="7" height="1"/><rect x="364.800" y="26.500" width="3.500" height="1.600"/>
<rect x="383.500" y="26" width="1" height="9"/><rect x="385.500" y="27.500" width="1.600" height="6"/><rect x="388" y="29" width="1.600" height="3"/>
<rect x="403.500" y="26" width="1" height="9"/><rect x="401" y="27.500" width="1.600" height="6"/><rect x="405.500" y="28.500" width="1.600" height="4"/>
<rect x="421.500" y="26" width="1" height="9"/><rect x="419" y="27.500" width="1.600" height="6"/><rect x="416.500" y="29" width="1.600" height="3"/>
<rect x="444.500" y="26" width="2" height="2.200"/><rect x="447.500" y="26" width="2" height="2.200"/><rect x="444.500" y="29.300" width="2" height="2.200"/><rect x="447.500" y="29.300" width="2" height="2.200"/><rect x="444.500" y="32.600" width="2" height="2.200"/><rect x="447.500" y="32.600" width="2" height="2.200"/>
</g>
<g stroke="#8c8c8c" fill="none" stroke-width="1">
<path d="M506 32.500a2.500 2.500 0 0 1 .5-5a3 3 0 0 1 5.500-.5a2.200 2.200 0 0 1 2.500 3.500"/><path d="M509 33h5l-1.500-1.500M514 33l-1.500 1.500"/>
<circle cx="527" cy="30" r="4.200"/><circle cx="527" cy="30" r="1.500"/>
<path d="M543 25.500v9M538.500 30h9M543 25.500l-1.500 1.800M543 25.500l1.500 1.800M543 34.500l-1.500-1.800M543 34.500l1.500-1.800M538.500 30l1.800-1.500M538.500 30l1.800 1.500M547.500 30l-1.800-1.500M547.500 30l-1.800 1.500"/><circle cx="543" cy="30" r="1.800"/>
<path d="M559 26v8M555 30h8"/><circle cx="559" cy="26" r="1" fill="#8c8c8c"/><circle cx="559" cy="34" r="1" fill="#8c8c8c"/><circle cx="555" cy="30" r="1" fill="#8c8c8c"/><circle cx="563" cy="30" r="1" fill="#8c8c8c"/>
<rect x="570.500" y="28" width="6" height="4" fill="#8c8c8c"/><path d="M577 30l3-2v4z" fill="#8c8c8c"/>
</g>
<circle cx="704" cy="29.500" r="3.300" stroke="#e0e0e0" stroke-width="1.400" fill="none"/><path d="M701.600 32l-2.800 3" stroke="#e0e0e0" stroke-width="1.600"/>
<rect x="719.500" y="26.500" width="9" height="8" stroke="#e0e0e0" stroke-width="1.200" fill="none"/><rect x="720" y="27" width="3" height="7" fill="#e0e0e0"/><rect x="720" y="27" width="8" height="1.500" fill="#e0e0e0"/>
<path d="M735 30l2 2 2-2" stroke="#9a9a9a" fill="none" stroke-width="0.900"/>
</svg>
<div class="t" style="left:57px;top:26.5px;color:#d8d8d8;">自动选择：</div>
<div class="t" style="left:102px;top:26.5px;color:#d8d8d8;">图层</div>
<div class="t" style="left:156px;top:26.500px;color:#d8d8d8;">显示变换控件</div>
<div class="t" style="left:466px;top:26.500px;color:#777;">3D 模式：</div>

<svg style="left:0;top:41px" width="28" height="599" viewBox="0 41 28 599">
<rect x="0" y="41" width="28" height="7.500" fill="#272727"/>
<rect x="0" y="48" width="4.500" height="592" fill="#2c2c2c"/><rect x="0" y="41" width="1.200" height="599" fill="#202020"/><rect x="26.600" y="48" width="1.400" height="592" fill="#242424"/>
<path d="M8 43l-1.800 1.800 1.800 1.800M10.500 43l-1.800 1.800 1.800 1.800" stroke="#bdbdbd" stroke-width="0.800" fill="none"/>
<rect x="5" y="52" width="18" height="1" fill="#3e3e3e"/>
<rect x="5" y="60.3" width="19" height="14" rx="1" fill="#1e1e1e"/>
<g stroke="#d6d6d6" stroke-width="1" fill="#d6d6d6"><path d="M14 63.3v8M10 67.3h8" fill="none"/><path d="M14 61.8l-1.700 2h3.400zM14 72.8l-1.700-2h3.400zM8.5 67.3l2-1.700v3.400zM19.5 67.3l-2-1.700v3.400z" stroke="none"/></g>
<path d="M23 71.3v2.200h-2.200z" fill="#9a9a9a"/>
<rect x="9" y="79.44999999999999" width="10" height="8" fill="none" stroke="#d6d6d6" stroke-width="1" stroke-dasharray="2 1.300"/>
<path d="M23 87.4v2.200h-2.200z" fill="#9a9a9a"/>
<ellipse cx="14.5" cy="98.1" rx="4.800" ry="3.200" fill="none" stroke="#d6d6d6" stroke-width="1" transform="rotate(-15 14 99.6)"/><path d="M10.5 100.1c-1.500 1-1 3 .5 3.500" stroke="#d6d6d6" stroke-width="1" fill="none"/><circle cx="10.7" cy="100.8" r="1" fill="none" stroke="#d6d6d6" stroke-width="0.700"/>
<path d="M23 103.6v2.200h-2.200z" fill="#9a9a9a"/>
<ellipse cx="12" cy="116.75" rx="3.500" ry="3.200" fill="none" stroke="#d6d6d6" stroke-width="0.800" stroke-dasharray="1.500 1"/><path d="M19 110.75l-4.500 5.500 1.500 1.200z" fill="#d6d6d6"/><path d="M14.5 116.25c-1.500 0-2 1.500-2.500 3 1.500 0 3.500-.5 4-2z" fill="#d6d6d6"/>
<path d="M23 119.8v2.200h-2.200z" fill="#9a9a9a"/>
<path d="M11.5 126.39999999999998v8h8.500M8.5 129.39999999999998h8.300v8.300" fill="none" stroke="#d6d6d6" stroke-width="1.300"/>
<path d="M23 135.9v2.200h-2.200z" fill="#9a9a9a"/>
<path d="M18.5 143.55l-2.500 2.500" stroke="#d6d6d6" stroke-width="3" stroke-linecap="round"/><path d="M15.5 146.55l-5 5-1 2 2-1 5-5" fill="none" stroke="#d6d6d6" stroke-width="1.100"/><path d="M14 145.05l3.500 3.500" stroke="#d6d6d6" stroke-width="1.300"/>
<path d="M23 152.1v2.200h-2.200z" fill="#9a9a9a"/>
<rect x="9.8" y="160.2" width="8.400" height="8" rx="2" fill="none" stroke="#d6d6d6" stroke-width="1.500"/><path d="M8.5 162.7h2M17.5 162.7h2M8.5 165.7h2M17.5 165.7h2" stroke="#d6d6d6" stroke-width="0.800"/>
<path d="M23 168.2v2.200h-2.200z" fill="#9a9a9a"/>
<path d="M19 174.84999999999997l-5.500 6 1.500 1.500z" fill="#d6d6d6"/><path d="M13 181.84999999999997c-2 0-2.500 2-4 3.500 2 .5 5 0 5.500-2z" fill="#d6d6d6"/>
<path d="M23 184.3v2.200h-2.200z" fill="#9a9a9a"/>
<path d="M12.5 191.5h3l-.6 4h2.600v2.500h-7v-2.500h2.600z" fill="#d6d6d6"/><rect x="9.5" y="199.3" width="9" height="1.600" fill="#d6d6d6"/>
<path d="M23 200.5v2.200h-2.200z" fill="#9a9a9a"/>
<path d="M19 207.64999999999998l-5 5.500 1.500 1.500z" fill="#d6d6d6"/><path d="M13.5 214.14999999999998c-2 0-2.500 2-3.500 3.500 2 .3 4.500 0 5-2z" fill="#d6d6d6"/><path d="M9 211.64999999999998a3.500 3.500 0 0 1 5-3.500" fill="none" stroke="#d6d6d6" stroke-width="0.900"/><path d="M8 210.64999999999998l1 2 1.800-1.200" fill="none" stroke="#d6d6d6" stroke-width="0.800"/>
<path d="M23 216.6v2.200h-2.200z" fill="#9a9a9a"/>
<path d="M9 230.3l5-5.500 4.500 3.500-5 5.500h-2z" fill="none" stroke="#d6d6d6" stroke-width="1"/><path d="M12 227.0l4.500 3.500 2-2.300-4.500-3.500z" fill="#d6d6d6"/><path d="M9 233.8h10" stroke="#d6d6d6" stroke-width="0.800"/>
<path d="M23 232.8v2.200h-2.200z" fill="#9a9a9a"/>
<defs><linearGradient id="tg"><stop offset="0" stop-color="#e8e8e8"/><stop offset="1" stop-color="#444"/></linearGradient></defs><rect x="9" y="240.95" width="10" height="8" fill="url(#tg)" stroke="#d6d6d6" stroke-width="0.900"/>
<path d="M23 248.9v2.200h-2.200z" fill="#9a9a9a"/>
<path d="M13 256.09999999999997c3-1 6 1 5.500 4-.5 2-3 2.500-4 4l-2 3-2-.5 1.500-4c-2-1-2.500-5.500 1-6.500z" fill="#d6d6d6"/><path d="M14.5 259.09999999999997l-2 5" stroke="#333" stroke-width="0.800"/>
<path d="M23 265.1v2.200h-2.200z" fill="#9a9a9a"/>
<circle cx="15.5" cy="275.75" r="3.300" fill="#d6d6d6"/><path d="M13.5 277.75l-4 4.500" stroke="#d6d6d6" stroke-width="1.800"/>
<path d="M23 281.2v2.200h-2.200z" fill="#9a9a9a"/>
<path d="M9 298.4l1.500-6 4-3 4.500 4.500-3 4z" fill="none" stroke="#d6d6d6" stroke-width="1"/><path d="M9 298.4l4-4" stroke="#d6d6d6" stroke-width="0.800"/><circle cx="13.5" cy="293.9" r="1" fill="#d6d6d6"/><path d="M15.5 287.9l4.500 4.500" stroke="#d6d6d6" stroke-width="1.500"/>
<path d="M23 297.4v2.200h-2.200z" fill="#9a9a9a"/>
<path d="M8 305.54999999999995v7M7 306.54999999999995l1-1 1 1M7 311.54999999999995l1 1 1-1" stroke="#d6d6d6" stroke-width="0.700" fill="none"/>
<path d="M23 313.5v2.200h-2.200z" fill="#9a9a9a"/>
<path d="M11 320.2v10l2.500-2.500 2 4 1.800-.8-2-4h3.500z" fill="#d6d6d6"/>
<path d="M23 329.7v2.200h-2.200z" fill="#9a9a9a"/>
<path d="M13 336.84999999999997c2-1 3 .5 3 2 2-.5 3.500.5 3 2.500-.3 1.500-2 1.800-2.500 3 .5 1.500-.5 3-2 2.500-1.500-.5-2-1.500-3-1-1.500.8-3.500.3-3.300-1.500.2-1.500 1.500-2 1.300-3-.5-2 .5-3.500 2-3 .5-.5 1-1.200 1.500-1.500z" fill="none" stroke="#d6d6d6" stroke-width="1"/>
<path d="M23 345.8v2.200h-2.200z" fill="#9a9a9a"/>
<path d="M11 363.0c-1.500-2-3-4-3-5.500 1-.5 2 .5 2.500 1.500v-5c.8-.8 1.500-.5 1.800 0v-1.500c.7-.7 1.500-.5 1.800 0v1c.7-.7 1.500-.5 1.800 0v1.500c.7-.6 1.500-.3 1.700.3v5c0 1.500-.5 2.200-1 2.700z" fill="#d6d6d6"/>
<path d="M23 362.0v2.200h-2.200z" fill="#9a9a9a"/>
<circle cx="13" cy="373.15" r="3.500" fill="none" stroke="#d6d6d6" stroke-width="1.200"/><path d="M15.5 375.65l3.500 3.500" stroke="#d6d6d6" stroke-width="1.800"/>
<circle cx="10.5" cy="390.3" r="1" fill="#d6d6d6"/><circle cx="14" cy="390.3" r="1" fill="#d6d6d6"/><circle cx="17.5" cy="390.3" r="1" fill="#d6d6d6"/>
<path d="M23 394.3v2.200h-2.200z" fill="#9a9a9a"/>
<rect x="6.500" y="402" width="3.500" height="3.500" fill="#fff" stroke="#ddd" stroke-width="0.500"/><rect x="5" y="400.500" width="3.500" height="3.500" fill="#111" stroke="#ddd" stroke-width="0.600"/>
<path d="M17 402.500h3.500v3.500M17 402.500l1.300-1.300M17 402.500l1.300 1.300M20.500 406l-1.300-1.300M20.500 406l1.300-1.300" stroke="#d6d6d6" stroke-width="0.800" fill="none"/>
<rect x="12" y="417.500" width="11" height="11" fill="#fff" stroke="#8a8a8a" stroke-width="0.600"/><rect x="5" y="411.500" width="11.500" height="11" fill="#000" stroke="#cfcfcf" stroke-width="0.900"/>
<rect x="9" y="436.500" width="10" height="7.500" fill="none" stroke="#d6d6d6" stroke-width="0.900"/><circle cx="14" cy="440.200" r="2.200" fill="none" stroke="#d6d6d6" stroke-width="0.800" stroke-dasharray="1.200 0.800"/>
<rect x="9" y="454.500" width="8" height="6" fill="none" stroke="#d6d6d6" stroke-width="0.900"/><rect x="11.500" y="452.500" width="8" height="6" fill="#333" stroke="#d6d6d6" stroke-width="0.900"/>
<path d="M23 460.6v2.200h-2.200z" fill="#9a9a9a"/>
</svg>
<div class="t" style="left:10.500px;top:304px;font-family:'Liberation Serif',serif;font-weight:bold;font-size:12px;color:#d6d6d6;">T</div>
<div class="t" style="left:35px;top:45.5px;color:#dcdcdc;font-size:7.42px;">4a2b8794ly1fg1dgsz5vhj21570qok24 拷贝.psd @ 19.9% (图层 6, RGB/8#) *</div>
<svg style="left:289px;top:46px" width="8" height="8" viewBox="0 0 8 8"><path d="M2 2l3.500 3.500M5.500 2l-3.500 3.500" stroke="#bdbdbd" stroke-width="0.900" fill="none"/></svg>

<svg style="left:28px;top:57px" width="525" height="12" viewBox="28 57 525 12"><g stroke="#6a6a6a" stroke-width="0.8">
<path d="M45.5 59.5V69"/>
<path d="M70.2 59.5V69"/>
<path d="M94.9 59.5V69"/>
<path d="M119.6 59.5V69"/>
<path d="M144.3 59.5V69"/>
<path d="M169.0 59.5V69"/>
<path d="M193.7 59.5V69"/>
<path d="M218.4 59.5V69"/>
<path d="M243.1 59.5V69"/>
<path d="M267.8 59.5V69"/>
<path d="M292.5 59.5V69"/>
<path d="M317.2 59.5V69"/>
<path d="M341.9 59.5V69"/>
<path d="M366.6 59.5V69"/>
<path d="M391.3 59.5V69"/>
<path d="M416.0 59.5V69"/>
<path d="M440.7 59.5V69"/>
<path d="M465.4 59.5V69"/>
<path d="M490.1 59.5V69"/>
<path d="M514.8 59.5V69"/>
<path d="M539.5 59.5V69"/>
<path d="M39.3 66.5V69" stroke="#555"/>
<path d="M51.7 66.5V69" stroke="#555"/>
<path d="M57.9 66.5V69" stroke="#555"/>
<path d="M64.0 66.5V69" stroke="#555"/>
<path d="M76.4 66.5V69" stroke="#555"/>
<path d="M82.5 66.5V69" stroke="#555"/>
<path d="M88.7 66.5V69" stroke="#555"/>
<path d="M101.1 66.5V69" stroke="#555"/>
<path d="M107.2 66.5V69" stroke="#555"/>
<path d="M113.4 66.5V69" stroke="#555"/>
<path d="M125.8 66.5V69" stroke="#555"/>
<path d="M131.9 66.5V69" stroke="#555"/>
<path d="M138.1 66.5V69" stroke="#555"/>
<path d="M150.5 66.5V69" stroke="#555"/>
<path d="M156.7 66.5V69" stroke="#555"/>
<path d="M162.8 66.5V69" stroke="#555"/>
<path d="M175.2 66.5V69" stroke="#555"/>
<path d="M181.3 66.5V69" stroke="#555"/>
<path d="M187.5 66.5V69" stroke="#555"/>
<path d="M199.9 66.5V69" stroke="#555"/>
<path d="M206.1 66.5V69" stroke="#555"/>
<path d="M212.2 66.5V69" stroke="#555"/>
<path d="M224.6 66.5V69" stroke="#555"/>
<path d="M230.8 66.5V69" stroke="#555"/>
<path d="M236.9 66.5V69" stroke="#555"/>
<path d="M249.3 66.5V69" stroke="#555"/>
<path d="M255.4 66.5V69" stroke="#555"/>
<path d="M261.6 66.5V69" stroke="#555"/>
<path d="M274.0 66.5V69" stroke="#555"/>
<path d="M280.2 66.5V69" stroke="#555"/>
<path d="M286.3 66.5V69" stroke="#555"/>
<path d="M298.7 66.5V69" stroke="#555"/>
<path d="M304.9 66.5V69" stroke="#555"/>
<path d="M311.0 66.5V69" stroke="#555"/>
<path d="M323.4 66.5V69" stroke="#555"/>
<path d="M329.6 66.5V69" stroke="#555"/>
<path d="M335.7 66.5V69" stroke="#555"/>
<path d="M348.1 66.5V69" stroke="#555"/>
<path d="M354.2 66.5V69" stroke="#555"/>
<path d="M360.4 66.5V69" stroke="#555"/>
<path d="M372.8 66.5V69" stroke="#555"/>
<path d="M379.0 66.5V69" stroke="#555"/>
<path d="M385.1 66.5V69" stroke="#555"/>
<path d="M397.5 66.5V69" stroke="#555"/>
<path d="M403.7 66.5V69" stroke="#555"/>
<path d="M409.8 66.5V69" stroke="#555"/>
<path d="M422.2 66.5V69" stroke="#555"/>
<path d="M428.4 66.5V69" stroke="#555"/>
<path d="M434.5 66.5V69" stroke="#555"/>
<path d="M446.9 66.5V69" stroke="#555"/>
<path d="M453.1 66.5V69" stroke="#555"/>
<path d="M459.2 66.5V69" stroke="#555"/>
<path d="M471.6 66.5V69" stroke="#555"/>
<path d="M477.8 66.5V69" stroke="#555"/>
<path d="M483.9 66.5V69" stroke="#555"/>
<path d="M496.3 66.5V69" stroke="#555"/>
<path d="M502.5 66.5V69" stroke="#555"/>
<path d="M508.6 66.5V69" stroke="#555"/>
<path d="M521.0 66.5V69" stroke="#555"/>
<path d="M527.1 66.5V69" stroke="#555"/>
<path d="M533.3 66.5V69" stroke="#555"/>
<path d="M545.7 66.5V69" stroke="#555"/>
<path d="M551.8 66.5V69" stroke="#555"/>
</g></svg>
<div class="t rl" style="left:47.5px;top:61.5px;">200</div>
<div class="t rl" style="left:72.2px;top:61.5px;">400</div>
<div class="t rl" style="left:96.9px;top:61.5px;">600</div>
<div class="t rl" style="left:121.6px;top:61.5px;">800</div>
<div class="t rl" style="left:146.3px;top:61.5px;">1000</div>
<div class="t rl" style="left:171.0px;top:61.5px;">1200</div>
<div class="t rl" style="left:195.7px;top:61.5px;">1400</div>
<div class="t rl" style="left:220.4px;top:61.5px;">1600</div>
<div class="t rl" style="left:245.1px;top:61.5px;">1800</div>
<div class="t rl" style="left:269.8px;top:61.5px;">2000</div>
<div class="t rl" style="left:294.5px;top:61.5px;">2200</div>
<div class="t rl" style="left:319.2px;top:61.5px;">2400</div>
<div class="t rl" style="left:343.9px;top:61.5px;">2600</div>
<div class="t rl" style="left:368.6px;top:61.5px;">2800</div>
<div class="t rl" style="left:393.3px;top:61.5px;">3000</div>
<div class="t rl" style="left:418.0px;top:61.5px;">3200</div>
<div class="t rl" style="left:442.7px;top:61.5px;">3400</div>
<div class="t rl" style="left:467.4px;top:61.5px;">3600</div>
<div class="t rl" style="left:492.1px;top:61.5px;">3800</div>
<div class="t rl" style="left:516.8px;top:61.5px;">4000</div>
<div class="t rl" style="left:541.5px;top:61.5px;">4200</div>
<svg style="left:28px;top:69px" width="10" height="557" viewBox="28 69 10 557"><g stroke="#6a6a6a" stroke-width="0.8">
<path d="M29 86.2H38"/>
<path d="M36 92.4H38" stroke="#555"/>
<path d="M36 98.5H38" stroke="#555"/>
<path d="M36 104.7H38" stroke="#555"/>
<path d="M29 110.9H38"/>
<path d="M36 117.1H38" stroke="#555"/>
<path d="M36 123.2H38" stroke="#555"/>
<path d="M36 129.4H38" stroke="#555"/>
<path d="M29 135.6H38"/>
<path d="M36 141.8H38" stroke="#555"/>
<path d="M36 147.9H38" stroke="#555"/>
<path d="M36 154.1H38" stroke="#555"/>
<path d="M29 160.3H38"/>
<path d="M36 166.5H38" stroke="#555"/>
<path d="M36 172.7H38" stroke="#555"/>
<path d="M36 178.8H38" stroke="#555"/>
<path d="M29 185.0H38"/>
<path d="M36 191.2H38" stroke="#555"/>
<path d="M36 197.3H38" stroke="#555"/>
<path d="M36 203.5H38" stroke="#555"/>
<path d="M29 209.7H38"/>
<path d="M36 215.9H38" stroke="#555"/>
<path d="M36 222.0H38" stroke="#555"/>
<path d="M36 228.2H38" stroke="#555"/>
<path d="M29 234.4H38"/>
<path d="M36 240.6H38" stroke="#555"/>
<path d="M36 246.8H38" stroke="#555"/>
<path d="M36 252.9H38" stroke="#555"/>
<path d="M29 259.1H38"/>
<path d="M36 265.3H38" stroke="#555"/>
<path d="M36 271.5H38" stroke="#555"/>
<path d="M36 277.6H38" stroke="#555"/>
<path d="M29 283.8H38"/>
<path d="M36 290.0H38" stroke="#555"/>
<path d="M36 296.2H38" stroke="#555"/>
<path d="M36 302.3H38" stroke="#555"/>
<path d="M29 308.5H38"/>
<path d="M36 314.7H38" stroke="#555"/>
<path d="M36 320.9H38" stroke="#555"/>
<path d="M36 327.0H38" stroke="#555"/>
<path d="M29 333.2H38"/>
<path d="M36 339.4H38" stroke="#555"/>
<path d="M36 345.6H38" stroke="#555"/>
<path d="M36 351.7H38" stroke="#555"/>
<path d="M29 357.9H38"/>
<path d="M36 364.1H38" stroke="#555"/>
<path d="M36 370.2H38" stroke="#555"/>
<path d="M36 376.4H38" stroke="#555"/>
<path d="M29 382.6H38"/>
<path d="M36 388.8H38" stroke="#555"/>
<path d="M36 395.0H38" stroke="#555"/>
<path d="M36 401.1H38" stroke="#555"/>
<path d="M29 407.3H38"/>
<path d="M36 413.5H38" stroke="#555"/>
<path d="M36 419.6H38" stroke="#555"/>
<path d="M36 425.8H38" stroke="#555"/>
<path d="M29 432.0H38"/>
<path d="M36 438.2H38" stroke="#555"/>
<path d="M36 444.4H38" stroke="#555"/>
<path d="M36 450.5H38" stroke="#555"/>
<path d="M29 456.7H38"/>
<path d="M36 462.9H38" stroke="#555"/>
<path d="M36 469.1H38" stroke="#555"/>
<path d="M36 475.2H38" stroke="#555"/>
<path d="M29 481.4H38"/>
<path d="M36 487.6H38" stroke="#555"/>
<path d="M36 493.8H38" stroke="#555"/>
<path d="M36 499.9H38" stroke="#555"/>
<path d="M29 506.1H38"/>
<path d="M36 512.3H38" stroke="#555"/>
<path d="M36 518.4H38" stroke="#555"/>
<path d="M36 524.6H38" stroke="#555"/>
<path d="M29 530.8H38"/>
<path d="M36 537.0H38" stroke="#555"/>
<path d="M36 543.1H38" stroke="#555"/>
<path d="M36 549.3H38" stroke="#555"/>
<path d="M29 555.5H38"/>
<path d="M36 561.7H38" stroke="#555"/>
<path d="M36 567.9H38" stroke="#555"/>
<path d="M36 574.0H38" stroke="#555"/>
<path d="M29 580.2H38"/>
<path d="M36 586.4H38" stroke="#555"/>
<path d="M36 592.6H38" stroke="#555"/>
<path d="M36 598.7H38" stroke="#555"/>
<path d="M29 604.9H38"/>
<path d="M36 611.1H38" stroke="#555"/>
<path d="M36 617.2H38" stroke="#555"/>
<path d="M36 623.4H38" stroke="#555"/>
</g></svg>
<div class="t rl" style="left:30.5px;top:68.3px;">0</div>
<div class="t rl" style="left:30.5px;top:73.6px;">0</div>
<div class="t rl" style="left:30.5px;top:78.9px;">0</div>
<div class="t rl" style="left:30.5px;top:87.7px;">8</div>
<div class="t rl" style="left:30.5px;top:93.0px;">0</div>
<div class="t rl" style="left:30.5px;top:98.3px;">0</div>
<div class="t rl" style="left:30.5px;top:112.4px;">6</div>
<div class="t rl" style="left:30.5px;top:117.7px;">0</div>
<div class="t rl" style="left:30.5px;top:123.0px;">0</div>
<div class="t rl" style="left:30.5px;top:137.1px;">4</div>
<div class="t rl" style="left:30.5px;top:142.4px;">0</div>
<div class="t rl" style="left:30.5px;top:147.7px;">0</div>
<div class="t rl" style="left:30.5px;top:161.8px;">2</div>
<div class="t rl" style="left:30.5px;top:167.1px;">0</div>
<div class="t rl" style="left:30.5px;top:172.4px;">0</div>
<div class="t rl" style="left:30.5px;top:186.5px;">0</div>
<div class="t rl" style="left:30.5px;top:211.2px;">2</div>
<div class="t rl" style="left:30.5px;top:216.5px;">0</div>
<div class="t rl" style="left:30.5px;top:221.8px;">0</div>
<div class="t rl" style="left:30.5px;top:235.9px;">4</div>
<div class="t rl" style="left:30.5px;top:241.2px;">0</div>
<div class="t rl" style="left:30.5px;top:246.5px;">0</div>
<div class="t rl" style="left:30.5px;top:260.6px;">6</div>
<div class="t rl" style="left:30.5px;top:265.9px;">0</div>
<div class="t rl" style="left:30.5px;top:271.2px;">0</div>
<div class="t rl" style="left:30.5px;top:285.3px;">8</div>
<div class="t rl" style="left:30.5px;top:290.6px;">0</div>
<div class="t rl" style="left:30.5px;top:295.9px;">0</div>
<div class="t rl" style="left:30.5px;top:310.0px;">1</div>
<div class="t rl" style="left:30.5px;top:315.3px;">0</div>
<div class="t rl" style="left:30.5px;top:320.6px;">0</div>
<div class="t rl" style="left:30.5px;top:325.9px;">0</div>
<div class="t rl" style="left:30.5px;top:334.7px;">1</div>
<div class="t rl" style="left:30.5px;top:340.0px;">2</div>
<div class="t rl" style="left:30.5px;top:345.3px;">0</div>
<div class="t rl" style="left:30.5px;top:350.6px;">0</div>
<div class="t rl" style="left:30.5px;top:359.4px;">1</div>
<div class="t rl" style="left:30.5px;top:364.7px;">4</div>
<div class="t rl" style="left:30.5px;top:370.0px;">0</div>
<div class="t rl" style="left:30.5px;top:375.3px;">0</div>
<div class="t rl" style="left:30.5px;top:384.1px;">1</div>
<div class="t rl" style="left:30.5px;top:389.4px;">6</div>
<div class="t rl" style="left:30.5px;top:394.7px;">0</div>
<div class="t rl" style="left:30.5px;top:400.0px;">0</div>
<div class="t rl" style="left:30.5px;top:408.8px;">1</div>
<div class="t rl" style="left:30.5px;top:414.1px;">8</div>
<div class="t rl" style="left:30.5px;top:419.4px;">0</div>
<div class="t rl" style="left:30.5px;top:424.7px;">0</div>
<div class="t rl" style="left:30.5px;top:433.5px;">2</div>
<div class="t rl" style="left:30.5px;top:438.8px;">0</div>
<div class="t rl" style="left:30.5px;top:444.1px;">0</div>
<div class="t rl" style="left:30.5px;top:449.4px;">0</div>
<div class="t rl" style="left:30.5px;top:458.2px;">2</div>
<div class="t rl" style="left:30.5px;top:463.5px;">2</div>
<div class="t rl" style="left:30.5px;top:468.8px;">0</div>
<div class="t rl" style="left:30.5px;top:474.1px;">0</div>
<div class="t rl" style="left:30.5px;top:482.9px;">2</div>
<div class="t rl" style="left:30.5px;top:488.2px;">4</div>
<div class="t rl" style="left:30.5px;top:493.5px;">0</div>
<div class="t rl" style="left:30.5px;top:498.8px;">0</div>
<div class="t rl" style="left:30.5px;top:507.6px;">2</div>
<div class="t rl" style="left:30.5px;top:512.9px;">6</div>
<div class="t rl" style="left:30.5px;top:518.2px;">0</div>
<div class="t rl" style="left:30.5px;top:523.5px;">0</div>
<div class="t rl" style="left:30.5px;top:532.3px;">2</div>
<div class="t rl" style="left:30.5px;top:537.6px;">8</div>
<div class="t rl" style="left:30.5px;top:542.9px;">0</div>
<div class="t rl" style="left:30.5px;top:548.2px;">0</div>
<div class="t rl" style="left:30.5px;top:557.0px;">3</div>
<div class="t rl" style="left:30.5px;top:562.3px;">0</div>
<div class="t rl" style="left:30.5px;top:567.6px;">0</div>
<div class="t rl" style="left:30.5px;top:572.9px;">0</div>
<div class="t rl" style="left:30.5px;top:581.7px;">3</div>
<div class="t rl" style="left:30.5px;top:587.0px;">2</div>
<div class="t rl" style="left:30.5px;top:592.3px;">0</div>
<div class="t rl" style="left:30.5px;top:597.6px;">0</div>
<div class="t rl" style="left:30.5px;top:606.4px;">3</div>
<div class="t rl" style="left:30.5px;top:611.7px;">4</div>
<div class="t rl" style="left:30.5px;top:617.0px;">0</div>
<div class="t" style="left:31px;top:629.5px;color:#d0d0d0;font-size:7.2px;">19.93%</div>
<div class="t" style="left:80px;top:629.5px;color:#bdbdbd;font-size:7.2px;">文档:31.4M/464.5M</div>
<svg style="left:28px;top:626px" width="536" height="14" viewBox="28 626 536 14">
<rect x="57" y="627" width="1" height="13" fill="#272727"/>
<path d="M165 630.500l2.200 2.500-2.200 2.500" stroke="#bbb" stroke-width="0.900" fill="none"/>
<rect x="173" y="626" width="380" height="14" fill="#2a2a2a"/>
<path d="M179.500 630.500l-2.200 2.500 2.200 2.500" stroke="#777" stroke-width="0.900" fill="none"/>
<path d="M547 630.500l2.200 2.500-2.200 2.500" stroke="#777" stroke-width="0.900" fill="none"/>
<rect x="300" y="628.500" width="133" height="8" fill="#4d4d4d"/>
<rect x="553" y="626" width="11" height="14" fill="#2c2c2c"/>
</svg>
<svg style="left:553px;top:59px" width="11" height="568" viewBox="553 59 11 568">
<path d="M556 65.500l2.500-2.200 2.500 2.200" stroke="#777" stroke-width="0.900" fill="none"/>
<path d="M556 619l2.500 2.200 2.500-2.200" stroke="#777" stroke-width="0.900" fill="none"/>
</svg>

<svg style="left:553px;top:48px" width="38" height="592" viewBox="553 48 38 592">
<rect x="555.500" y="226" width="6.500" height="232" fill="#4a4a4a"/>
<rect x="564" y="48" width="1" height="592" fill="#272727"/>
<rect x="565" y="73" width="24" height="1.200" fill="#2a2a2a"/>
<rect x="565" y="100.5" width="24" height="1.200" fill="#2a2a2a"/>
<rect x="565" y="143" width="24" height="1.200" fill="#2a2a2a"/>
<rect x="565" y="168" width="24" height="1.200" fill="#2a2a2a"/>
<rect x="565" y="193" width="24" height="1.200" fill="#2a2a2a"/>
<rect x="565" y="220.5" width="24" height="1.200" fill="#2a2a2a"/>
<rect x="565" y="246" width="24" height="1.200" fill="#2a2a2a"/>
<rect x="565" y="271" width="24" height="1.200" fill="#2a2a2a"/>
<rect x="565" y="296.5" width="24" height="1.200" fill="#2a2a2a"/>
<rect x="565" y="322" width="24" height="1.200" fill="#2a2a2a"/>
<rect x="565" y="347" width="24" height="1.200" fill="#2a2a2a"/>
<rect x="566" y="52" width="22" height="20" fill="#3a3a3a"/>
<circle cx="577.0" cy="63.5" r="4.800" fill="#8a8a8a"/><circle cx="576.5" cy="63.5" r="1.600" fill="#3a3a3a"/><circle cx="580.5" cy="60.0" r="1.700" fill="#9a9a9a"/><circle cx="581.0" cy="67.0" r="1.700" fill="#9a9a9a"/><circle cx="582.5" cy="63.5" r="1.500" fill="#3a3a3a"/>
<path d="M578.5 81.5h3l-.6 3.500h2.600v2.500h-7v-2.500h2.600z" fill="#d8d8d8"/><rect x="576.0" y="88.8" width="8" height="1.500" fill="#d8d8d8"/><path d="M571.5 82.5h2.500M571.5 84.5h2.500M571.5 86.5h2.500M571.0 81.8v5.400" stroke="#d8d8d8" stroke-width="0.700"/>
<path d="M578.5 109.0h4.500M580.0 109.0v8M581.8 109.0v8" stroke="#d8d8d8" stroke-width="1.100" fill="none"/><path d="M580.0 109.0a2.200 2.200 0 0 0 0 4.400z" fill="#d8d8d8"/><rect x="572.0" y="113.0" width="4" height="3.600" fill="none" stroke="#d8d8d8" stroke-width="0.900"/><rect x="574.0" y="115.0" width="4" height="3.600" fill="#333" stroke="#d8d8d8" stroke-width="0.900"/>
<rect x="571.5" y="132.0" width="3.800" height="3.600" fill="none" stroke="#d8d8d8" stroke-width="0.900"/><path d="M574.5 135.5l1.500 1.500" stroke="#d8d8d8" stroke-width="0.900"/>
<rect x="571.0" y="150.5" width="11.500" height="10.500" rx="2.500" fill="#e4e4e4"/><circle cx="581.5" cy="153.5" r="3" fill="#e4e4e4"/><circle cx="576.5" cy="155.8" r="3.600" fill="none" stroke="#444" stroke-width="0.700"/>
<circle cx="577.5" cy="284" r="5.300" fill="none" stroke="#d8d8d8" stroke-width="1"/><circle cx="576.2" cy="282.7" r="1.800" fill="none" stroke="#d8d8d8" stroke-width="0.800"/><circle cx="579.0" cy="285.5" r="1.800" fill="none" stroke="#d8d8d8" stroke-width="0.800"/><path d="M574.0 287.5l7-7" stroke="#d8d8d8" stroke-width="0.800"/>
<ellipse cx="577.5" cy="309.5" rx="6" ry="4.200" fill="none" stroke="#d8d8d8" stroke-width="1"/><ellipse cx="576.3" cy="309.8" rx="2.600" ry="2.200" fill="none" stroke="#d8d8d8" stroke-width="0.800"/><ellipse cx="579.5" cy="309.8" rx="2.300" ry="1.900" fill="none" stroke="#d8d8d8" stroke-width="0.800"/>
<path d="M572.5 341.0l9-10M582.5 341.0l-9-10" stroke="#eee" stroke-width="1.500" fill="none"/><path d="M580.5 330.0l3 1-2.500 3zM574.5 330.0l-3 1 2.500 3z" fill="#eee"/>
<rect x="571.0" y="363.0" width="13" height="1.800" fill="#d8d8d8"/>
<path d="M577.5 389.5l4.800 2.500v5.500l-4.800 2.800-4.800-2.800v-5.500z" fill="none" stroke="#d8d8d8" stroke-width="1"/><path d="M572.7 392l4.800 2.500 4.800-2.500M577.5 394.5v5.800" fill="none" stroke="#d8d8d8" stroke-width="0.800"/>
<rect x="572.0" y="413.2" width="11" height="1.400" fill="#d8d8d8"/><rect x="572.0" y="415.6" width="11" height="1.400" fill="#d8d8d8"/><path d="M575.0 407l2.500 1.200v2.600l-2.500 1.200-2.500-1.200v-2.600z" fill="none" stroke="#d8d8d8" stroke-width="0.800"/><rect x="580.0" y="407.2" width="2.200" height="2" fill="#d8d8d8"/><rect x="580.0" y="410" width="2.200" height="2" fill="#d8d8d8"/>
<path d="M572.0 425l3.500 1.200 3.500 6 3.500 1.200v2l-3.500-1.200-3.500-6-3.500-1.200z" fill="none" stroke="#d8d8d8" stroke-width="0.900"/><path d="M572.0 427l3.500 7.500 4 1 3-2-3.500-8-3.500-.5z" fill="none" stroke="#d8d8d8" stroke-width="0.800"/>
</svg>
<div class="t" style="left:577px;top:125.500px;font-size:11px;color:#d8d8d8;">A</div>
<div class="t" style="left:574px;top:150.500px;font-family:'Liberation Serif',serif;font-style:italic;font-size:10px;color:#333;font-weight:bold;">F</div>
<div class="t" style="left:571px;top:175px;font-family:'Liberation Serif',serif;font-style:italic;font-weight:bold;font-size:11px;color:#fff;letter-spacing:-1px;">T<span style="font-size:9px;position:relative;top:1.500px;">K</span></div>
<svg style="left:569px;top:185px" width="16" height="6" viewBox="0 0 16 6"><path d="M1 3c2-2 4-2 6 0s4 2 7-.5" stroke="#d8d8d8" stroke-width="1.100" fill="none"/></svg>
<div class="a" style="left:570px;top:203px;width:15px;height:14px;background:linear-gradient(135deg,#b030c0 0%,#d02060 25%,#e0b020 50%,#30b040 75%,#2060d0 100%);opacity:.9;border-radius:2px;clip-path:polygon(30% 0,100% 0,100% 100%,0 100%,0 40%);"></div>
<div class="t" style="left:571px;top:202px;font-family:'Liberation Serif',serif;font-style:italic;font-weight:bold;font-size:11px;color:#fff;letter-spacing:-1px;">T<span style="font-size:9px;position:relative;top:1.500px;">K</span></div>
<div class="a" style="left:569.500px;top:226px;width:16px;height:15px;background:linear-gradient(180deg,#4a6a5a 0%,#b04a90 45%,#c060a0 60%,#4a70c0 100%);"></div>
<div class="t" style="left:571px;top:227px;font-family:'Liberation Serif',serif;font-style:italic;font-weight:bold;font-size:11px;color:#fff;letter-spacing:-1px;">T<span style="font-size:9px;position:relative;top:1.500px;">K</span></div>
<div class="t" style="left:571px;top:250px;font-family:'Liberation Serif',serif;font-style:italic;font-weight:bold;font-size:11px;color:#fff;letter-spacing:-1px;">T<span style="font-size:9px;position:relative;top:1.500px;">K</span></div>
<svg style="left:569px;top:261px" width="18" height="8" viewBox="0 0 18 8"><path d="M1 1l4 3-4 3z" fill="#e02020"/><path d="M6.500 1l4 3-4 3z" fill="#30c030"/><path d="M12 1l5 3-5 3z" fill="#f0e020"/></svg>
<div class="t" style="left:571px;top:350px;font-family:'Liberation Serif',serif;font-style:italic;font-weight:bold;font-size:11px;color:#e8e8e8;letter-spacing:-1px;">T<span style="font-size:9px;position:relative;top:1.500px;">K</span></div>
<div class="t" style="left:571.500px;top:368.500px;font-family:'Liberation Serif',serif;font-size:14px;color:#d8d8d8;">R</div>
<div class="t" style="left:572px;top:381px;font-family:'Liberation Serif',serif;font-size:4px;color:#d8d8d8;letter-spacing:0.500px;">PRO</div>
<div class="t" style="left:571.500px;top:441.500px;font-family:'Liberation Serif',serif;font-style:italic;font-size:13px;color:#d8d8d8;">A</div>
<svg style="left:564px;top:41px" width="183" height="599" viewBox="564 41 183 599">
<path d="M582 43l-1.800 1.800 1.800 1.800M585 43l-1.800 1.800 1.800 1.800" stroke="#bdbdbd" stroke-width="0.900" fill="none"/>
<path d="M736 43l1.800 1.800-1.800 1.800M739 43l1.800 1.800-1.800 1.800" stroke="#bdbdbd" stroke-width="0.900" fill="none"/>
<rect x="591" y="48" width="156" height="16" fill="#272727"/><rect x="591" y="48" width="32" height="16" fill="#333"/>
<g stroke="#9a9a9a" stroke-width="0.800"><path d="M734 54.500h6M734 56.500h6M734 58.500h6"/></g>
<rect x="594" y="73" width="120" height="50" fill="#4a4a4a"/>
<path d="M634 123 L640 121.800 L648 119.500 L655 116.500 L661 113 L666 109.500 L668.500 107.500 L668.800 94 L669.300 82 L669.900 94 L670.500 88 L671.500 80 L672.500 74 L673 73 L676.500 73 L677 78 L677.600 73 L679.500 73 L680 80 L680.600 73 L686.500 73 L687 88 L687.700 104 L690 106.500 L694 110.500 L697 114.500 L699.500 118.500 L701.600 123 Z" fill="#dedede"/>
<path d="M707 76.500l3.500 6.500h-7z" fill="#e0e0e0"/><path d="M707 78.800v2.400M707 81.800v0.700" stroke="#444" stroke-width="0.800"/>
<rect x="591" y="125" width="156" height="3" fill="#272727"/>
<rect x="591" y="128" width="156" height="16" fill="#272727"/><rect x="591" y="128" width="25" height="16" fill="#333"/>
<g stroke="#777" stroke-width="0.800"><path d="M734 134.500h6M734 136.500h6M734 138.500h6"/></g>
<circle cx="625" cy="168.8" r="2.600" fill="none" stroke="#d4d4d4" stroke-width="0.900"/><path d="M625 166.20000000000002a2.600 2.600 0 0 1 0 5.200z" fill="#d4d4d4"/>
<path d="M628.60 168.80L630.00 168.80" stroke="#d4d4d4" stroke-width="0.900"/>
<path d="M627.55 171.35L628.54 172.34" stroke="#d4d4d4" stroke-width="0.900"/>
<path d="M625.00 172.40L625.00 173.80" stroke="#d4d4d4" stroke-width="0.900"/>
<path d="M622.45 171.35L621.46 172.34" stroke="#d4d4d4" stroke-width="0.900"/>
<path d="M621.40 168.80L620.00 168.80" stroke="#d4d4d4" stroke-width="0.900"/>
<path d="M622.45 166.25L621.46 165.26" stroke="#d4d4d4" stroke-width="0.900"/>
<path d="M625.00 165.20L625.00 163.80" stroke="#d4d4d4" stroke-width="0.900"/>
<path d="M627.55 166.25L628.54 165.26" stroke="#d4d4d4" stroke-width="0.900"/>
<path d="M634.5 172.8V168.8l1-2 1 3 1.200-5 1.300 4 1-3 1.200 2 1-4 1.200 4 1-2 1 3V172.8z" fill="#d4d4d4"/>
<rect x="650.0" y="164.6" width="10" height="8.5" fill="none" stroke="#d4d4d4" stroke-width="1"/><path d="M650 172.8C654 171.8 655 165.8 660 164.8M653.3 164.8v8.500M656.7 164.8v8.500M650 167.4h10M650 170.20000000000002h10" stroke="#d4d4d4" stroke-width="0.600" fill="none"/>
<rect x="665.0" y="164.6" width="10" height="8.5" fill="none" stroke="#d4d4d4" stroke-width="1"/><path d="M665 173.0L675 164.60000000000002V173.0z" fill="#d4d4d4"/><path d="M666.5 166.8h2.500M667.75 165.60000000000002v2.500M671.5 171.0h2.400" stroke="#d4d4d4" stroke-width="0.700"/><path d="M671.5 171.0h2.400" stroke="#333" stroke-width="0.800"/>
<path d="M679.5 164.8h10l-5 8.500z" fill="none" stroke="#d4d4d4" stroke-width="1.100"/><path d="M682.5 167.3h4l-2 3.300z" fill="#d4d4d4"/>
<rect x="612.6" y="181.6" width="10" height="8.5" fill="none" stroke="#d4d4d4" stroke-width="1"/><rect x="612.6" y="181.60000000000002" width="10" height="3" fill="#d4d4d4"/><path d="M614.6 181.8v8M617.6 181.8v8M620.6 181.8v8" stroke="#333" stroke-width="0.600"/><rect x="612.6" y="186.8" width="10" height="3.200" fill="#d4d4d4" opacity="0.550"/>
<path d="M632.6 181.3v3M628.1 183.3h9" stroke="#d4d4d4" stroke-width="1" fill="none"/><circle cx="629.4" cy="187.60000000000002" r="2.300" fill="none" stroke="#d4d4d4" stroke-width="1"/><circle cx="635.8000000000001" cy="187.60000000000002" r="2.300" fill="none" stroke="#d4d4d4" stroke-width="1"/><path d="M627.1 187.60000000000002h4.600M633.5 187.60000000000002h4.600" stroke="#d4d4d4" stroke-width="1"/>
<rect x="642.6" y="181.6" width="10" height="8.5" fill="none" stroke="#d4d4d4" stroke-width="1"/><rect x="647.6" y="181.60000000000002" width="5" height="8.400" fill="#d4d4d4"/>
<rect x="656.5" y="182.8" width="9" height="6.500" rx="1" fill="none" stroke="#d4d4d4" stroke-width="1"/><rect x="658.5" y="181.3" width="3" height="1.500" fill="#d4d4d4"/><circle cx="661" cy="186.10000000000002" r="1.700" fill="none" stroke="#d4d4d4" stroke-width="0.900"/><circle cx="665.8" cy="188.60000000000002" r="2.200" fill="#333" stroke="#d4d4d4" stroke-width="0.900"/>
<circle cx="677" cy="184.20000000000002" r="3" fill="#d4d4d4" opacity="0.900"/><circle cx="674.8" cy="187.60000000000002" r="3" fill="#d4d4d4" opacity="0.800"/><circle cx="679.2" cy="187.60000000000002" r="3" fill="#d4d4d4" opacity="0.800"/><circle cx="677" cy="186.4" r="1.300" fill="#333"/>
<rect x="687.0" y="181.6" width="10" height="8.5" fill="none" stroke="#d4d4d4" stroke-width="1"/><path d="M687 184.4h10M687 187.20000000000002h10M690.3 181.8v8M693.7 181.8v8" stroke="#d4d4d4" stroke-width="0.800"/><rect x="687" y="181.60000000000002" width="10" height="1.600" fill="#d4d4d4"/>
<rect x="620.0" y="197.8" width="10" height="8.5" fill="none" stroke="#d4d4d4" stroke-width="1"/><rect x="621.2" y="199" width="7.600" height="6" fill="#d4d4d4"/><path d="M623 204C624 201 626 203 627.5 199.8" stroke="#333" stroke-width="1.200" fill="none"/>
<rect x="635.0" y="197.8" width="10" height="8.5" fill="none" stroke="#d4d4d4" stroke-width="1"/><path d="M635 206.2L645 197.8V206.2z" fill="#d4d4d4" opacity="0.700"/><path d="M635 203L641 198M638 206L645 200.5" stroke="#d4d4d4" stroke-width="1"/>
<rect x="650.0" y="197.8" width="10" height="8.5" fill="none" stroke="#d4d4d4" stroke-width="1"/><path d="M650 206.2v-3h3v-2.500h3.500v-2.500h3.500v8z" fill="#d4d4d4"/>
<rect x="665.0" y="197.8" width="10" height="8.5" fill="none" stroke="#d4d4d4" stroke-width="1"/><path d="M665 197.8l5 4.200-5 4.200zM675 197.8l-5 4.200 5 4.200z" fill="#d4d4d4" opacity="0.750"/>
<defs><linearGradient id="gm"><stop offset="0" stop-color="#333"/><stop offset="1" stop-color="#ddd"/></linearGradient></defs><rect x="679.5" y="197.8" width="10" height="8.500" fill="url(#gm)" stroke="#d4d4d4" stroke-width="1"/>
<rect x="591" y="213" width="156" height="4.500" fill="#272727"/>
<rect x="591" y="217.500" width="156" height="15.500" fill="#272727"/><rect x="591" y="217.500" width="24.500" height="15.500" fill="#333"/>
<g stroke="#9a9a9a" stroke-width="0.800"><path d="M734 223.500h6M734 225.500h6M734 227.500h6"/></g>
<rect x="592.500" y="238.500" width="55" height="11.500" rx="1.500" fill="#262626" stroke="#3c3c3c" stroke-width="0.700"/>
<circle cx="598" cy="243.300" r="2" fill="none" stroke="#d8d8d8" stroke-width="0.900"/><path d="M596.600 244.800l-1.800 2" stroke="#d8d8d8" stroke-width="1"/>
<path d="M640.500 243.200l2 2 2-2" stroke="#9a9a9a" fill="none" stroke-width="0.900"/>
<rect x="656" y="240.200" width="8" height="6.600" fill="none" stroke="#d8d8d8" stroke-width="0.900"/><path d="M657 245.800l1.800-2.500 1.500 1.500 1.200-1 1.500 2z" fill="#d8d8d8"/>
<circle cx="674" cy="243.500" r="3.400" fill="none" stroke="#d8d8d8" stroke-width="0.900"/><path d="M671.600 245.900a3.400 3.400 0 0 0 4.800-4.800z" fill="#d8d8d8"/>
<rect x="700.500" y="240.300" width="7.500" height="6.400" fill="none" stroke="#d8d8d8" stroke-width="0.800"/><g fill="#d8d8d8"><rect x="699.500" y="239.300" width="2" height="2"/><rect x="707" y="239.300" width="2" height="2"/><rect x="699.500" y="245.700" width="2" height="2"/><rect x="707" y="245.700" width="2" height="2"/></g>
<path d="M716 239.500h4.500l2.500 2.500v5.500h-7z" fill="#d8d8d8"/><rect x="715" y="243.800" width="3.800" height="3.800" fill="#333" stroke="#d8d8d8" stroke-width="0.700"/>
<rect x="733.500" y="239" width="5.500" height="10" rx="2.700" fill="#262626"/><circle cx="736.200" cy="241.500" r="2.400" fill="#cfcfcf"/>
<rect x="592.500" y="255.500" width="72" height="11" rx="1.500" fill="#2e2e2e" stroke="#3d3d3d" stroke-width="0.700"/>
<path d="M657.500 260.200l2 2 2-2" stroke="#5a5a5a" fill="none" stroke-width="0.900"/>
<rect x="705.500" y="255.500" width="24" height="11" rx="1" fill="#2e2e2e" stroke="#3d3d3d" stroke-width="0.700"/><rect x="731" y="255.500" width="9" height="11" rx="1" fill="#2e2e2e" stroke="#3d3d3d" stroke-width="0.700"/><path d="M733.700 260.200l1.800 1.800 1.800-1.800" stroke="#5a5a5a" fill="none" stroke-width="0.800"/>
<rect x="705.500" y="272.500" width="24" height="11" rx="1" fill="#2e2e2e" stroke="#3d3d3d" stroke-width="0.700"/><rect x="731" y="272.500" width="9" height="11" rx="1" fill="#2e2e2e" stroke="#3d3d3d" stroke-width="0.700"/><path d="M733.700 277.200l1.800 1.800 1.800-1.800" stroke="#5a5a5a" fill="none" stroke-width="0.800"/>
<g fill="#8a8a8a"><rect x="617" y="275.500" width="2.200" height="2.200"/><rect x="620.800" y="275.500" width="2.200" height="2.200"/><rect x="617" y="279.300" width="2.200" height="2.200"/><rect x="620.800" y="279.300" width="2.200" height="2.200"/><rect x="619" y="277.400" width="2.100" height="2.100"/></g>
<path d="M637.500 274.500l-4 5.500M633.500 280c-1 .5-1.800 1.800-2 2.500 1 0 2.200-.5 2.800-1.500" stroke="#8a8a8a" stroke-width="1.300" fill="none"/>
<path d="M648 274.500v8M644 278.500h8M648 274.500l-1.300 1.500M648 274.500l1.300 1.500M648 282.500l-1.300-1.500M648 282.500l1.300-1.500M644 278.500l1.500-1.300M644 278.500l1.500 1.300M652 278.500l-1.500-1.300M652 278.500l-1.500 1.300" stroke="#8a8a8a" stroke-width="0.900" fill="none"/>
<path d="M659.500 274.500v6.500h6.500M657.500 276.500h6.500v6.500" stroke="#8a8a8a" stroke-width="1" fill="none"/>
<rect x="672" y="278" width="6" height="4.500" rx="0.700" fill="#8a8a8a"/><path d="M673.200 278v-1.500a1.800 1.800 0 0 1 3.600 0v1.500" stroke="#8a8a8a" stroke-width="0.900" fill="none"/>
<rect x="735" y="285" width="12" height="335" fill="#2c2c2c"/>
<rect x="736.500" y="356" width="7" height="254" fill="#4a4a4a"/>
<path d="M737.500 296l2.500-2.200 2.500 2.200" stroke="#8a8a8a" stroke-width="0.900" fill="none"/><path d="M737.500 613l2.500 2.200 2.500-2.200" stroke="#8a8a8a" stroke-width="0.900" fill="none"/>
</svg>
<div class="t" style="left:596px;top:54px;color:#f0f0f0;font-weight:bold;">直方图</div>
<div class="t" style="left:628px;top:54px;color:#9a9a9a;width:10.5px;overflow:hidden;">颜色</div>
<div class="t" style="left:645.5px;top:54px;color:#9a9a9a;width:10.5px;overflow:hidden;">导航</div>
<div class="t" style="left:662px;top:54px;color:#9a9a9a;width:10.5px;overflow:hidden;">色板</div>
<div class="t" style="left:678px;top:54px;color:#9a9a9a;width:10.5px;overflow:hidden;">样式</div>
<div class="t" style="left:694.5px;top:54px;color:#9a9a9a;width:10.5px;overflow:hidden;">信息</div>
<div class="t" style="left:710px;top:54px;color:#9a9a9a;width:10.5px;overflow:hidden;">路径</div>
<div class="t" style="left:596px;top:132.5px;color:#f0f0f0;font-weight:bold;">调整</div>
<div class="t" style="left:596px;top:150.5px;color:#cfcfcf;">添加调整</div>
<div class="t" style="left:596px;top:221.5px;color:#f0f0f0;font-weight:bold;">图层</div>
<div class="t" style="left:621px;top:221.5px;color:#9a9a9a;">历史记录</div>
<div class="t" style="left:662px;top:221.5px;color:#9a9a9a;">通道</div>
<div class="t" style="left:688px;top:221.5px;color:#9a9a9a;">动作</div>
<div class="t" style="left:606px;top:240px;color:#e0e0e0;text-decoration:underline;">类型</div>
<div class="t" style="left:686px;top:239px;color:#d8d8d8;font-family:'Liberation Serif',serif;font-weight:bold;font-size:10px;">T</div>
<div class="t" style="left:599px;top:257.5px;color:#6e6e6e;">正常</div>
<div class="t" style="left:670.5px;top:257.5px;color:#7a7a7a;">不透明度：</div>
<div class="t" style="left:709px;top:257.8px;color:#6a6a6a;font-size:7px;">100%</div>
<div class="t" style="left:594.5px;top:274.5px;color:#7a7a7a;">锁定：</div>
<div class="t" style="left:685.5px;top:274.5px;color:#7a7a7a;">填充：</div>
<div class="t" style="left:709px;top:274.8px;color:#6a6a6a;font-size:7px;">100%</div>
<div class="a" style="left:591px;top:286.500px;width:144px;height:334.500px;overflow:hidden;">
<svg style="left:0;top:-1.500px" width="144" height="336" viewBox="591 285 144 336">
<defs><pattern id="ck" width="4" height="4" patternUnits="userSpaceOnUse"><rect width="4" height="4" fill="#fff"/><rect width="2" height="2" fill="#d4d4d4"/><rect x="2" y="2" width="2" height="2" fill="#d4d4d4"/></pattern>
<linearGradient id="ph2"><stop offset="0" stop-color="#f4f4f0"/><stop offset="0.450" stop-color="#e8e6da"/><stop offset="0.550" stop-color="#c2c0a2"/><stop offset="1" stop-color="#b9ba9c"/></linearGradient>
<linearGradient id="ph1" x1="0" y1="0" x2="0" y2="1"><stop offset="0" stop-color="#c8c7b2"/><stop offset="0.500" stop-color="#c0c2a8"/><stop offset="1" stop-color="#aab394"/></linearGradient></defs>
<rect x="610" y="333.7" width="125" height="18.0" fill="#4b4b4b"/>
<rect x="591" y="279.7" width="144" height="0.800" fill="#2b2b2b"/>
<rect x="591" y="297.7" width="144" height="0.800" fill="#2b2b2b"/>
<rect x="591" y="315.7" width="144" height="0.800" fill="#2b2b2b"/>
<rect x="591" y="333.7" width="144" height="0.800" fill="#2b2b2b"/>
<rect x="591" y="351.7" width="144" height="0.800" fill="#2b2b2b"/>
<rect x="591" y="369.7" width="144" height="0.800" fill="#2b2b2b"/>
<rect x="591" y="387.7" width="144" height="0.800" fill="#2b2b2b"/>
<rect x="591" y="405.7" width="144" height="0.800" fill="#2b2b2b"/>
<rect x="591" y="423.7" width="144" height="0.800" fill="#2b2b2b"/>
<rect x="591" y="441.7" width="144" height="0.800" fill="#2b2b2b"/>
<rect x="591" y="459.7" width="144" height="0.800" fill="#2b2b2b"/>
<rect x="591" y="477.7" width="144" height="0.800" fill="#2b2b2b"/>
<rect x="591" y="495.7" width="144" height="0.800" fill="#2b2b2b"/>
<rect x="591" y="513.7" width="144" height="0.800" fill="#2b2b2b"/>
<rect x="591" y="531.7" width="144" height="0.800" fill="#2b2b2b"/>
<rect x="591" y="549.7" width="144" height="0.800" fill="#2b2b2b"/>
<rect x="591" y="567.7" width="144" height="0.800" fill="#2b2b2b"/>
<rect x="591" y="585.7" width="144" height="0.800" fill="#2b2b2b"/>
<rect x="591" y="603.7" width="144" height="0.800" fill="#2b2b2b"/>
<rect x="591" y="621.7" width="144" height="0.800" fill="#2b2b2b"/>
<rect x="609.200" y="285" width="0.800" height="336" fill="#2b2b2b"/>
<rect x="596.500" y="284.7" width="8" height="8" fill="none" stroke="#3a3a3a" stroke-width="0.700"/>
<path d="M618.500 285.2v5.500M618.500 290.7l-1.800-1.800M618.500 290.7l-0.200-2.300" stroke="#d0d0d0" stroke-width="0.900" fill="none"/><path d="M616.300 291.2h2.500v-2.500z" fill="#d0d0d0"/>
<circle cx="631.500" cy="288.7" r="3.300" fill="none" stroke="#d8d8d8" stroke-width="0.900"/><path d="M629.200 291.0a3.300 3.300 0 0 0 4.600-4.600z" fill="#d8d8d8"/>
<rect x="643.5" y="284.7" width="3" height="3.600" rx="1.200" fill="none" stroke="#d0d0d0" stroke-width="0.800"/><rect x="643.5" y="289.1" width="3" height="3.600" rx="1.200" fill="none" stroke="#d0d0d0" stroke-width="0.800"/><path d="M645 286.9v3.600" stroke="#d0d0d0" stroke-width="0.800"/>
<rect x="650.5" y="281.7" width="19.5" height="14" fill="#000"/>
<rect x="661.5" y="293.7" width="3" height="2" fill="#ddd"/>
<rect x="596.500" y="302.7" width="8" height="8" fill="none" stroke="#3a3a3a" stroke-width="0.700"/>
<path d="M618.500 303.2v5.500M618.500 308.7l-1.800-1.800M618.500 308.7l-0.200-2.300" stroke="#d0d0d0" stroke-width="0.900" fill="none"/><path d="M616.300 309.2h2.500v-2.500z" fill="#d0d0d0"/>
<rect x="621.3" y="299.7" width="19.5" height="14" fill="url(#ck)"/>
<rect x="643.5" y="302.7" width="3" height="3.600" rx="1.200" fill="none" stroke="#d0d0d0" stroke-width="0.800"/><rect x="643.5" y="307.1" width="3" height="3.600" rx="1.200" fill="none" stroke="#d0d0d0" stroke-width="0.800"/><path d="M645 304.9v3.600" stroke="#d0d0d0" stroke-width="0.800"/>
<rect x="650.5" y="299.7" width="19.5" height="14" fill="#fff"/>
<rect x="652.5" y="310.2" width="4.500" height="2.500" fill="#222"/><rect x="653.5" y="310.9" width="3" height="1.200" fill="#fff"/>
<rect x="596.500" y="320.7" width="8" height="8" fill="none" stroke="#3a3a3a" stroke-width="0.700"/>
<rect x="611.3" y="317.7" width="19.5" height="14" fill="url(#ph1)"/><rect x="614.3" y="325.7" width="9" height="5" fill="#9fb088" opacity="0.600"/><rect x="620.3" y="319.7" width="4" height="11" fill="#cfd8bf" opacity="0.700"/>
<rect x="634.0" y="320.7" width="3" height="3.600" rx="1.200" fill="none" stroke="#d0d0d0" stroke-width="0.800"/><rect x="634.0" y="325.1" width="3" height="3.600" rx="1.200" fill="none" stroke="#d0d0d0" stroke-width="0.800"/><path d="M635.5 322.9v3.600" stroke="#d0d0d0" stroke-width="0.800"/>
<rect x="640.5" y="317.7" width="19.5" height="14" fill="#fff"/>
<rect x="654.0" y="323.2" width="1.500" height="1.500" fill="#222"/>
<rect x="596.500" y="338.7" width="8" height="8" fill="none" stroke="#3a3a3a" stroke-width="0.700"/>
<rect x="611.3" y="335.7" width="19.5" height="14" fill="url(#ck)"/>
<rect x="622.3" y="341.7" width="8.500" height="8" fill="#c9c8b0" opacity="0.800"/><rect x="611.3" y="343.7" width="6" height="6" fill="#d6d5c4" opacity="0.700"/>
<path d="M610.3 338.7v-4h4M627.8 334.7h4v4M631.8 346.7v4h-4M614.3 350.7h-4v-4" stroke="#e8e8e8" stroke-width="0.900" fill="none"/>
<rect x="634.0" y="338.7" width="3" height="3.600" rx="1.200" fill="none" stroke="#d0d0d0" stroke-width="0.800"/><rect x="634.0" y="343.1" width="3" height="3.600" rx="1.200" fill="none" stroke="#d0d0d0" stroke-width="0.800"/><path d="M635.5 340.9v3.600" stroke="#d0d0d0" stroke-width="0.800"/>
<rect x="640.5" y="335.7" width="19.5" height="14" fill="#fff"/>
<rect x="654.0" y="341.2" width="1.500" height="1.500" fill="#222"/>
<rect x="596.500" y="356.7" width="8" height="8" fill="none" stroke="#3a3a3a" stroke-width="0.700"/>
<path d="M618.500 357.2v5.500M618.500 362.7l-1.800-1.800M618.500 362.7l-0.200-2.300" stroke="#d0d0d0" stroke-width="0.900" fill="none"/><path d="M616.300 363.2h2.500v-2.500z" fill="#d0d0d0"/>
<circle cx="631.500" cy="360.7" r="3.300" fill="none" stroke="#d8d8d8" stroke-width="0.900"/><path d="M629.200 363.0a3.300 3.300 0 0 0 4.600-4.600z" fill="#d8d8d8"/>
<rect x="643.5" y="356.7" width="3" height="3.600" rx="1.200" fill="none" stroke="#d0d0d0" stroke-width="0.800"/><rect x="643.5" y="361.1" width="3" height="3.600" rx="1.200" fill="none" stroke="#d0d0d0" stroke-width="0.800"/><path d="M645 358.9v3.600" stroke="#d0d0d0" stroke-width="0.800"/>
<rect x="650.5" y="353.7" width="19.5" height="14" fill="#000"/>
<path d="M664.0 355.2h2.500v4h-1v-3h-1.500z" fill="#eee"/>
<rect x="596.500" y="374.7" width="8" height="8" fill="none" stroke="#3a3a3a" stroke-width="0.700"/>
<path d="M618.500 375.2v5.500M618.500 380.7l-1.800-1.800M618.500 380.7l-0.200-2.300" stroke="#d0d0d0" stroke-width="0.900" fill="none"/><path d="M616.300 381.2h2.500v-2.500z" fill="#d0d0d0"/>
<rect x="621.3" y="371.7" width="19.5" height="14" fill="#c9bea9"/>
<rect x="643.5" y="374.7" width="3" height="3.600" rx="1.200" fill="none" stroke="#d0d0d0" stroke-width="0.800"/><rect x="643.5" y="379.1" width="3" height="3.600" rx="1.200" fill="none" stroke="#d0d0d0" stroke-width="0.800"/><path d="M645 376.9v3.600" stroke="#d0d0d0" stroke-width="0.800"/>
<rect x="650.5" y="371.7" width="19.5" height="14" fill="#000"/>
<path d="M663.5 373.7c1.500 1 1.500 3.500 0 5-2-1-2-3.500 0-5z" fill="#eee"/><circle cx="667.0" cy="381.7" r="2.300" fill="#bbb"/><path d="M659.5 385.7c2-3 6-4 10.500-3.500v3.500z" fill="#444"/>
<rect x="717.500" y="378.2" width="6" height="4.500" rx="0.600" fill="none" stroke="#d0d0d0" stroke-width="0.900"/><path d="M718.800 378.2v-1.500a1.700 1.700 0 0 1 3.400 0v1.500" stroke="#d0d0d0" stroke-width="0.900" fill="none"/>
<rect x="596.500" y="392.7" width="8" height="8" fill="none" stroke="#3a3a3a" stroke-width="0.700"/>
<path d="M618.500 393.2v5.500M618.500 398.7l-1.800-1.800M618.500 398.7l-0.200-2.300" stroke="#d0d0d0" stroke-width="0.900" fill="none"/><path d="M616.300 399.2h2.500v-2.500z" fill="#d0d0d0"/>
<circle cx="631.500" cy="396.7" r="3.300" fill="none" stroke="#d8d8d8" stroke-width="0.900"/><path d="M629.200 399.0a3.300 3.300 0 0 0 4.600-4.600z" fill="#d8d8d8"/>
<rect x="643.5" y="392.7" width="3" height="3.600" rx="1.200" fill="none" stroke="#d0d0d0" stroke-width="0.800"/><rect x="643.5" y="397.1" width="3" height="3.600" rx="1.200" fill="none" stroke="#d0d0d0" stroke-width="0.800"/><path d="M645 394.9v3.600" stroke="#d0d0d0" stroke-width="0.800"/>
<rect x="650.5" y="389.7" width="19.5" height="14" fill="#000"/>
<rect x="596.500" y="410.7" width="8" height="8" fill="none" stroke="#3a3a3a" stroke-width="0.700"/>
<path d="M618.500 411.2v5.500M618.500 416.7l-1.800-1.800M618.500 416.7l-0.200-2.300" stroke="#d0d0d0" stroke-width="0.900" fill="none"/><path d="M616.300 417.2h2.500v-2.500z" fill="#d0d0d0"/>
<circle cx="631.500" cy="414.7" r="3.300" fill="none" stroke="#d8d8d8" stroke-width="0.900"/><path d="M629.200 417.0a3.300 3.300 0 0 0 4.600-4.600z" fill="#d8d8d8"/>
<rect x="643.5" y="410.7" width="3" height="3.600" rx="1.200" fill="none" stroke="#d0d0d0" stroke-width="0.800"/><rect x="643.5" y="415.1" width="3" height="3.600" rx="1.200" fill="none" stroke="#d0d0d0" stroke-width="0.800"/><path d="M645 412.9v3.600" stroke="#d0d0d0" stroke-width="0.800"/>
<rect x="650.5" y="407.7" width="19.5" height="14" fill="#fff"/>
<rect x="596.500" y="428.7" width="8" height="8" fill="none" stroke="#3a3a3a" stroke-width="0.700"/>
<path d="M618.500 429.2v5.500M618.500 434.7l-1.800-1.800M618.500 434.7l-0.200-2.300" stroke="#d0d0d0" stroke-width="0.900" fill="none"/><path d="M616.300 435.2h2.500v-2.500z" fill="#d0d0d0"/>
<rect x="621.3" y="425.7" width="19.5" height="14" fill="#bcc5a9"/>
<rect x="643.5" y="428.7" width="3" height="3.600" rx="1.200" fill="none" stroke="#d0d0d0" stroke-width="0.800"/><rect x="643.5" y="433.1" width="3" height="3.600" rx="1.200" fill="none" stroke="#d0d0d0" stroke-width="0.800"/><path d="M645 430.9v3.600" stroke="#d0d0d0" stroke-width="0.800"/>
<rect x="650.5" y="425.7" width="19.5" height="14" fill="#000"/>
<path d="M664.5 433.7l2 1 .5 5h-2.500z" fill="#eee"/>
<rect x="596.500" y="446.7" width="8" height="8" fill="none" stroke="#3a3a3a" stroke-width="0.700"/>
<path d="M618.500 447.2v5.500M618.500 452.7l-1.800-1.800M618.500 452.7l-0.200-2.300" stroke="#d0d0d0" stroke-width="0.900" fill="none"/><path d="M616.300 453.2h2.500v-2.500z" fill="#d0d0d0"/>
<rect x="626.8" y="446.2" width="9" height="9" fill="#000" stroke="#6a6a6a" stroke-width="0.800"/>
<rect x="643.5" y="446.7" width="3" height="3.600" rx="1.200" fill="none" stroke="#d0d0d0" stroke-width="0.800"/><rect x="643.5" y="451.1" width="3" height="3.600" rx="1.200" fill="none" stroke="#d0d0d0" stroke-width="0.800"/><path d="M645 448.9v3.600" stroke="#d0d0d0" stroke-width="0.800"/>
<rect x="650.5" y="443.7" width="19.5" height="14" fill="#000"/>
<path d="M663.0 444.7l1.500 1.500-.5 3 3 3 1.500 5.500h-8.500l1-5 1.500-2z" fill="#999"/><path d="M663.5 447.7l1.500 3-1 7h-1.500z" fill="#ccc"/>
<rect x="596.500" y="464.7" width="8" height="8" fill="none" stroke="#3a3a3a" stroke-width="0.700"/>
<path d="M618.500 465.2v5.500M618.500 470.7l-1.800-1.800M618.500 470.7l-0.200-2.300" stroke="#d0d0d0" stroke-width="0.900" fill="none"/><path d="M616.300 471.2h2.500v-2.500z" fill="#d0d0d0"/>
<circle cx="631.500" cy="468.7" r="3.300" fill="none" stroke="#d8d8d8" stroke-width="0.900"/><path d="M629.200 471.0a3.300 3.300 0 0 0 4.600-4.600z" fill="#d8d8d8"/>
<rect x="643.5" y="464.7" width="3" height="3.600" rx="1.200" fill="none" stroke="#d0d0d0" stroke-width="0.800"/><rect x="643.5" y="469.1" width="3" height="3.600" rx="1.200" fill="none" stroke="#d0d0d0" stroke-width="0.800"/><path d="M645 466.9v3.600" stroke="#d0d0d0" stroke-width="0.800"/>
<rect x="650.5" y="461.7" width="19.5" height="14" fill="#000"/>
<path d="M663.0 462.7l1.500 1.500-.5 3 3 3 1.500 5.500h-8.500l1-5 1.500-2z" fill="#999"/><path d="M663.5 465.7l1.500 3-1 7h-1.500z" fill="#ccc"/>
<rect x="596.500" y="482.7" width="8" height="8" fill="none" stroke="#3a3a3a" stroke-width="0.700"/>
<path d="M618.500 483.2v5.500M618.500 488.7l-1.800-1.800M618.500 488.7l-0.200-2.300" stroke="#d0d0d0" stroke-width="0.900" fill="none"/><path d="M616.300 489.2h2.500v-2.500z" fill="#d0d0d0"/>
<circle cx="631.500" cy="486.7" r="3.300" fill="none" stroke="#d8d8d8" stroke-width="0.900"/><path d="M629.200 489.0a3.300 3.300 0 0 0 4.600-4.600z" fill="#d8d8d8"/>
<rect x="643.5" y="482.7" width="3" height="3.600" rx="1.200" fill="none" stroke="#d0d0d0" stroke-width="0.800"/><rect x="643.5" y="487.1" width="3" height="3.600" rx="1.200" fill="none" stroke="#d0d0d0" stroke-width="0.800"/><path d="M645 484.9v3.600" stroke="#d0d0d0" stroke-width="0.800"/>
<rect x="650.5" y="479.7" width="19.5" height="14" fill="#000"/>
<path d="M663.0 480.2l2 1.500-.5 3 3 3 1.500 6h-9l1-5.500 1.500-2z" fill="#c8c8c8"/><path d="M663.5 482.7l1.500 3-1 8h-2z" fill="#f4f4f4"/>
<rect x="596.500" y="500.7" width="8" height="8" fill="none" stroke="#3a3a3a" stroke-width="0.700"/>
<path d="M618.500 501.2v5.500M618.500 506.7l-1.800-1.800M618.500 506.7l-0.200-2.300" stroke="#d0d0d0" stroke-width="0.900" fill="none"/><path d="M616.300 507.2h2.500v-2.500z" fill="#d0d0d0"/>
<circle cx="631.500" cy="504.7" r="3.300" fill="none" stroke="#d8d8d8" stroke-width="0.900"/><path d="M629.200 507.0a3.300 3.300 0 0 0 4.600-4.600z" fill="#d8d8d8"/>
<rect x="643.5" y="500.7" width="3" height="3.600" rx="1.200" fill="none" stroke="#d0d0d0" stroke-width="0.800"/><rect x="643.5" y="505.1" width="3" height="3.600" rx="1.200" fill="none" stroke="#d0d0d0" stroke-width="0.800"/><path d="M645 502.9v3.600" stroke="#d0d0d0" stroke-width="0.800"/>
<rect x="650.5" y="497.7" width="19.5" height="14" fill="#000"/>
<path d="M663.0 502.2c.5-1.500 1.500-2.500 2.500-2.800l-.5 2.500c-.8.200-1.400.500-2 .3z" fill="#eee"/>
<rect x="596.500" y="518.7" width="8" height="8" fill="none" stroke="#3a3a3a" stroke-width="0.700"/>
<path d="M618.500 519.2v5.500M618.500 524.7l-1.800-1.800M618.500 524.7l-0.200-2.300" stroke="#d0d0d0" stroke-width="0.900" fill="none"/><path d="M616.300 525.2h2.500v-2.500z" fill="#d0d0d0"/>
<circle cx="631.500" cy="522.7" r="3.300" fill="none" stroke="#d8d8d8" stroke-width="0.900"/><path d="M629.200 525.0a3.300 3.300 0 0 0 4.600-4.600z" fill="#d8d8d8"/>
<rect x="643.5" y="518.7" width="3" height="3.600" rx="1.200" fill="none" stroke="#d0d0d0" stroke-width="0.800"/><rect x="643.5" y="523.1" width="3" height="3.600" rx="1.200" fill="none" stroke="#d0d0d0" stroke-width="0.800"/><path d="M645 520.9v3.600" stroke="#d0d0d0" stroke-width="0.800"/>
<rect x="650.5" y="515.7" width="19.5" height="14" fill="#000"/>
<path d="M663.0 519.7c-1 1-1 2.500-.3 3.500l-.5 3" stroke="#ccc" stroke-width="1" fill="none"/>
<path d="M596 540.7c2-3.200 6.500-3.200 8.500 0c-2 3.200-6.500 3.200-8.500 0z" fill="#d8d8d8"/><circle cx="600.250" cy="540.7" r="1.600" fill="#333"/>
<path d="M618.500 537.2v5.500M618.500 542.7l-1.800-1.800M618.500 542.7l-0.200-2.300" stroke="#d0d0d0" stroke-width="0.900" fill="none"/><path d="M616.300 543.2h2.500v-2.500z" fill="#d0d0d0"/>
<rect x="621.3" y="533.7" width="19.5" height="14" fill="url(#ck)"/>
<path d="M596 558.7c2-3.200 6.500-3.200 8.500 0c-2 3.200-6.500 3.200-8.500 0z" fill="#d8d8d8"/><circle cx="600.250" cy="558.7" r="1.600" fill="#333"/>
<rect x="611.3" y="551.7" width="19.5" height="14" fill="url(#ph2)"/><rect x="621.3" y="552.7" width="6" height="12" fill="#b5ba98" opacity="0.800"/><rect x="612.3" y="554.7" width="7" height="9" fill="url(#ck)" opacity="0.450"/>
<rect x="634.0" y="554.7" width="3" height="3.600" rx="1.200" fill="none" stroke="#d0d0d0" stroke-width="0.800"/><rect x="634.0" y="559.1" width="3" height="3.600" rx="1.200" fill="none" stroke="#d0d0d0" stroke-width="0.800"/><path d="M635.5 556.9v3.600" stroke="#d0d0d0" stroke-width="0.800"/>
<rect x="640.5" y="551.7" width="19.5" height="14" fill="#000"/>
<path d="M655.0 551.7c-1 1-1.500 2.500-1.500 4-1.500 1-2.800 2.500-3 4.500l1 .5-1.500 2 2 3h8.500v-14z" fill="#fff"/>
<path d="M596 576.7c2-3.200 6.500-3.200 8.500 0c-2 3.200-6.500 3.200-8.500 0z" fill="#d8d8d8"/><circle cx="600.250" cy="576.7" r="1.600" fill="#333"/>
<rect x="611.3" y="569.7" width="19.5" height="14" fill="url(#ph2)"/><rect x="621.3" y="570.7" width="6" height="12" fill="#b5ba98" opacity="0.800"/><rect x="612.3" y="572.7" width="7" height="9" fill="url(#ck)" opacity="0.450"/>
<rect x="634.0" y="572.7" width="3" height="3.600" rx="1.200" fill="none" stroke="#d0d0d0" stroke-width="0.800"/><rect x="634.0" y="577.1" width="3" height="3.600" rx="1.200" fill="none" stroke="#d0d0d0" stroke-width="0.800"/><path d="M635.5 574.9v3.600" stroke="#d0d0d0" stroke-width="0.800"/>
<rect x="640.5" y="569.7" width="19.5" height="14" fill="#000"/>
<path d="M655.0 569.7c-1 1-1.500 2.500-1.500 4-1.500 1-2.800 2.500-3 4.500l1 .5-1.500 2 2 3h8.500v-14z" fill="#fff"/>
<path d="M596 594.7c2-3.200 6.500-3.200 8.500 0c-2 3.200-6.500 3.200-8.500 0z" fill="#d8d8d8"/><circle cx="600.250" cy="594.7" r="1.600" fill="#333"/>
<rect x="611.3" y="587.7" width="19.5" height="14" fill="url(#ck)"/>
<path d="M596 612.7c2-3.200 6.500-3.200 8.500 0c-2 3.200-6.500 3.200-8.500 0z" fill="#d8d8d8"/><circle cx="600.250" cy="612.7" r="1.600" fill="#333"/>
<rect x="611.3" y="605.7" width="19.5" height="14" fill="url(#ph1)"/><rect x="614.3" y="613.7" width="9" height="5" fill="#9fb088" opacity="0.600"/><rect x="620.3" y="607.7" width="4" height="11" fill="#cfd8bf" opacity="0.700"/>
<rect x="717.500" y="612.2" width="6" height="4.500" rx="0.600" fill="none" stroke="#d0d0d0" stroke-width="0.900"/><path d="M718.800 612.2v-1.500a1.700 1.700 0 0 1 3.400 0v1.500" stroke="#d0d0d0" stroke-width="0.900" fill="none"/>
</svg>
<div class="t" style="left:85.5px;top:-1.8px;color:#e2e2e2;">曲线 5</div>
<div class="t" style="left:85.5px;top:16.2px;color:#e2e2e2;">图层 11 拷贝</div>
<div class="t" style="left:74.5px;top:34.2px;color:#e2e2e2;text-decoration:underline;">图层 8</div>
<div class="t" style="left:74.5px;top:52.2px;color:#e2e2e2;">图层 6</div>
<div class="t" style="left:85.5px;top:70.2px;color:#e2e2e2;">曲线 2</div>
<div class="t" style="left:85.5px;top:88.2px;color:#e2e2e2;">色彩</div>
<div class="t" style="left:85.5px;top:106.2px;color:#e2e2e2;">曲线 4</div>
<div class="t" style="left:85.5px;top:124.2px;color:#e2e2e2;">亮度/对比度 1</div>
<div class="t" style="left:85.5px;top:142.2px;color:#e2e2e2;">图层 3</div>
<div class="t" style="left:85.5px;top:160.2px;color:#e2e2e2;">颜色填充 1</div>
<div class="t" style="left:85.5px;top:178.2px;color:#e2e2e2;">选取颜色 1</div>
<div class="t" style="left:85.5px;top:196.2px;color:#e2e2e2;">色阶 1</div>
<div class="t" style="left:85.5px;top:214.2px;color:#e2e2e2;">曲线 1</div>
<div class="t" style="left:85.5px;top:232.2px;color:#e2e2e2;">曲线 3</div>
<div class="t" style="left:55.5px;top:250.2px;color:#e2e2e2;">图层 7</div>
<div class="t" style="left:74.5px;top:268.2px;color:#e2e2e2;text-decoration:underline;">图层 2 拷贝</div>
<div class="t" style="left:74.5px;top:286.2px;color:#e2e2e2;">图层 2</div>
<div class="t" style="left:45.5px;top:304.2px;color:#e2e2e2;">图层 4</div>
<div class="t" style="left:45.5px;top:322.2px;color:#e2e2e2;">背景</div>
</div>
<svg style="left:591px;top:621px" width="156" height="19" viewBox="591 621 156 19">
<rect x="591" y="621" width="156" height="0.800" fill="#2a2a2a"/>
<g fill="none" stroke="#6c6c6c" stroke-width="0.900"><rect x="618.500" y="627.7" width="4.500" height="3.600" rx="1.600"/><rect x="622.500" y="627.7" width="4.500" height="3.600" rx="1.600"/></g>
<circle cx="673" cy="629.5" r="3.400" fill="none" stroke="#d0d0d0" stroke-width="0.900"/><path d="M670.600 631.9a3.400 3.400 0 0 0 4.800-4.800z" fill="#d0d0d0"/>
<rect x="651.500" y="626.0" width="8.500" height="7" fill="#d0d0d0"/><circle cx="655.750" cy="629.5" r="2.200" fill="#333"/>
<path d="M685 627.0h3l1 1.200h4.500v5h-8.500z" fill="#d0d0d0"/>
<path d="M703.500 626.0h6v7h-4l-2-2z" fill="none" stroke="#d0d0d0" stroke-width="0.900"/><path d="M703.500 631.0h2v2" fill="none" stroke="#d0d0d0" stroke-width="0.900"/>
<path d="M719.500 627.3h6M721 627.3v-1.300h3v1.300M720.200 628.0l.4 5.500h3.800l.4-5.500" fill="none" stroke="#d0d0d0" stroke-width="0.900"/><path d="M721.500 629.0v3.500M723.500 629.0v3.500" stroke="#d0d0d0" stroke-width="0.600"/>
<path d="M641 634.5h2l-1 1z" fill="#d0d0d0" transform="translate(2,0)"/><path d="M675 634.5h2l-1 1z" fill="#d0d0d0" transform="translate(2,0)"/>
</svg>
<div class="t" style="left:636px;top:624.0px;color:#d0d0d0;font-family:'Liberation Serif',serif;font-style:italic;font-size:9.5px;">fx</div>
</body></html>
